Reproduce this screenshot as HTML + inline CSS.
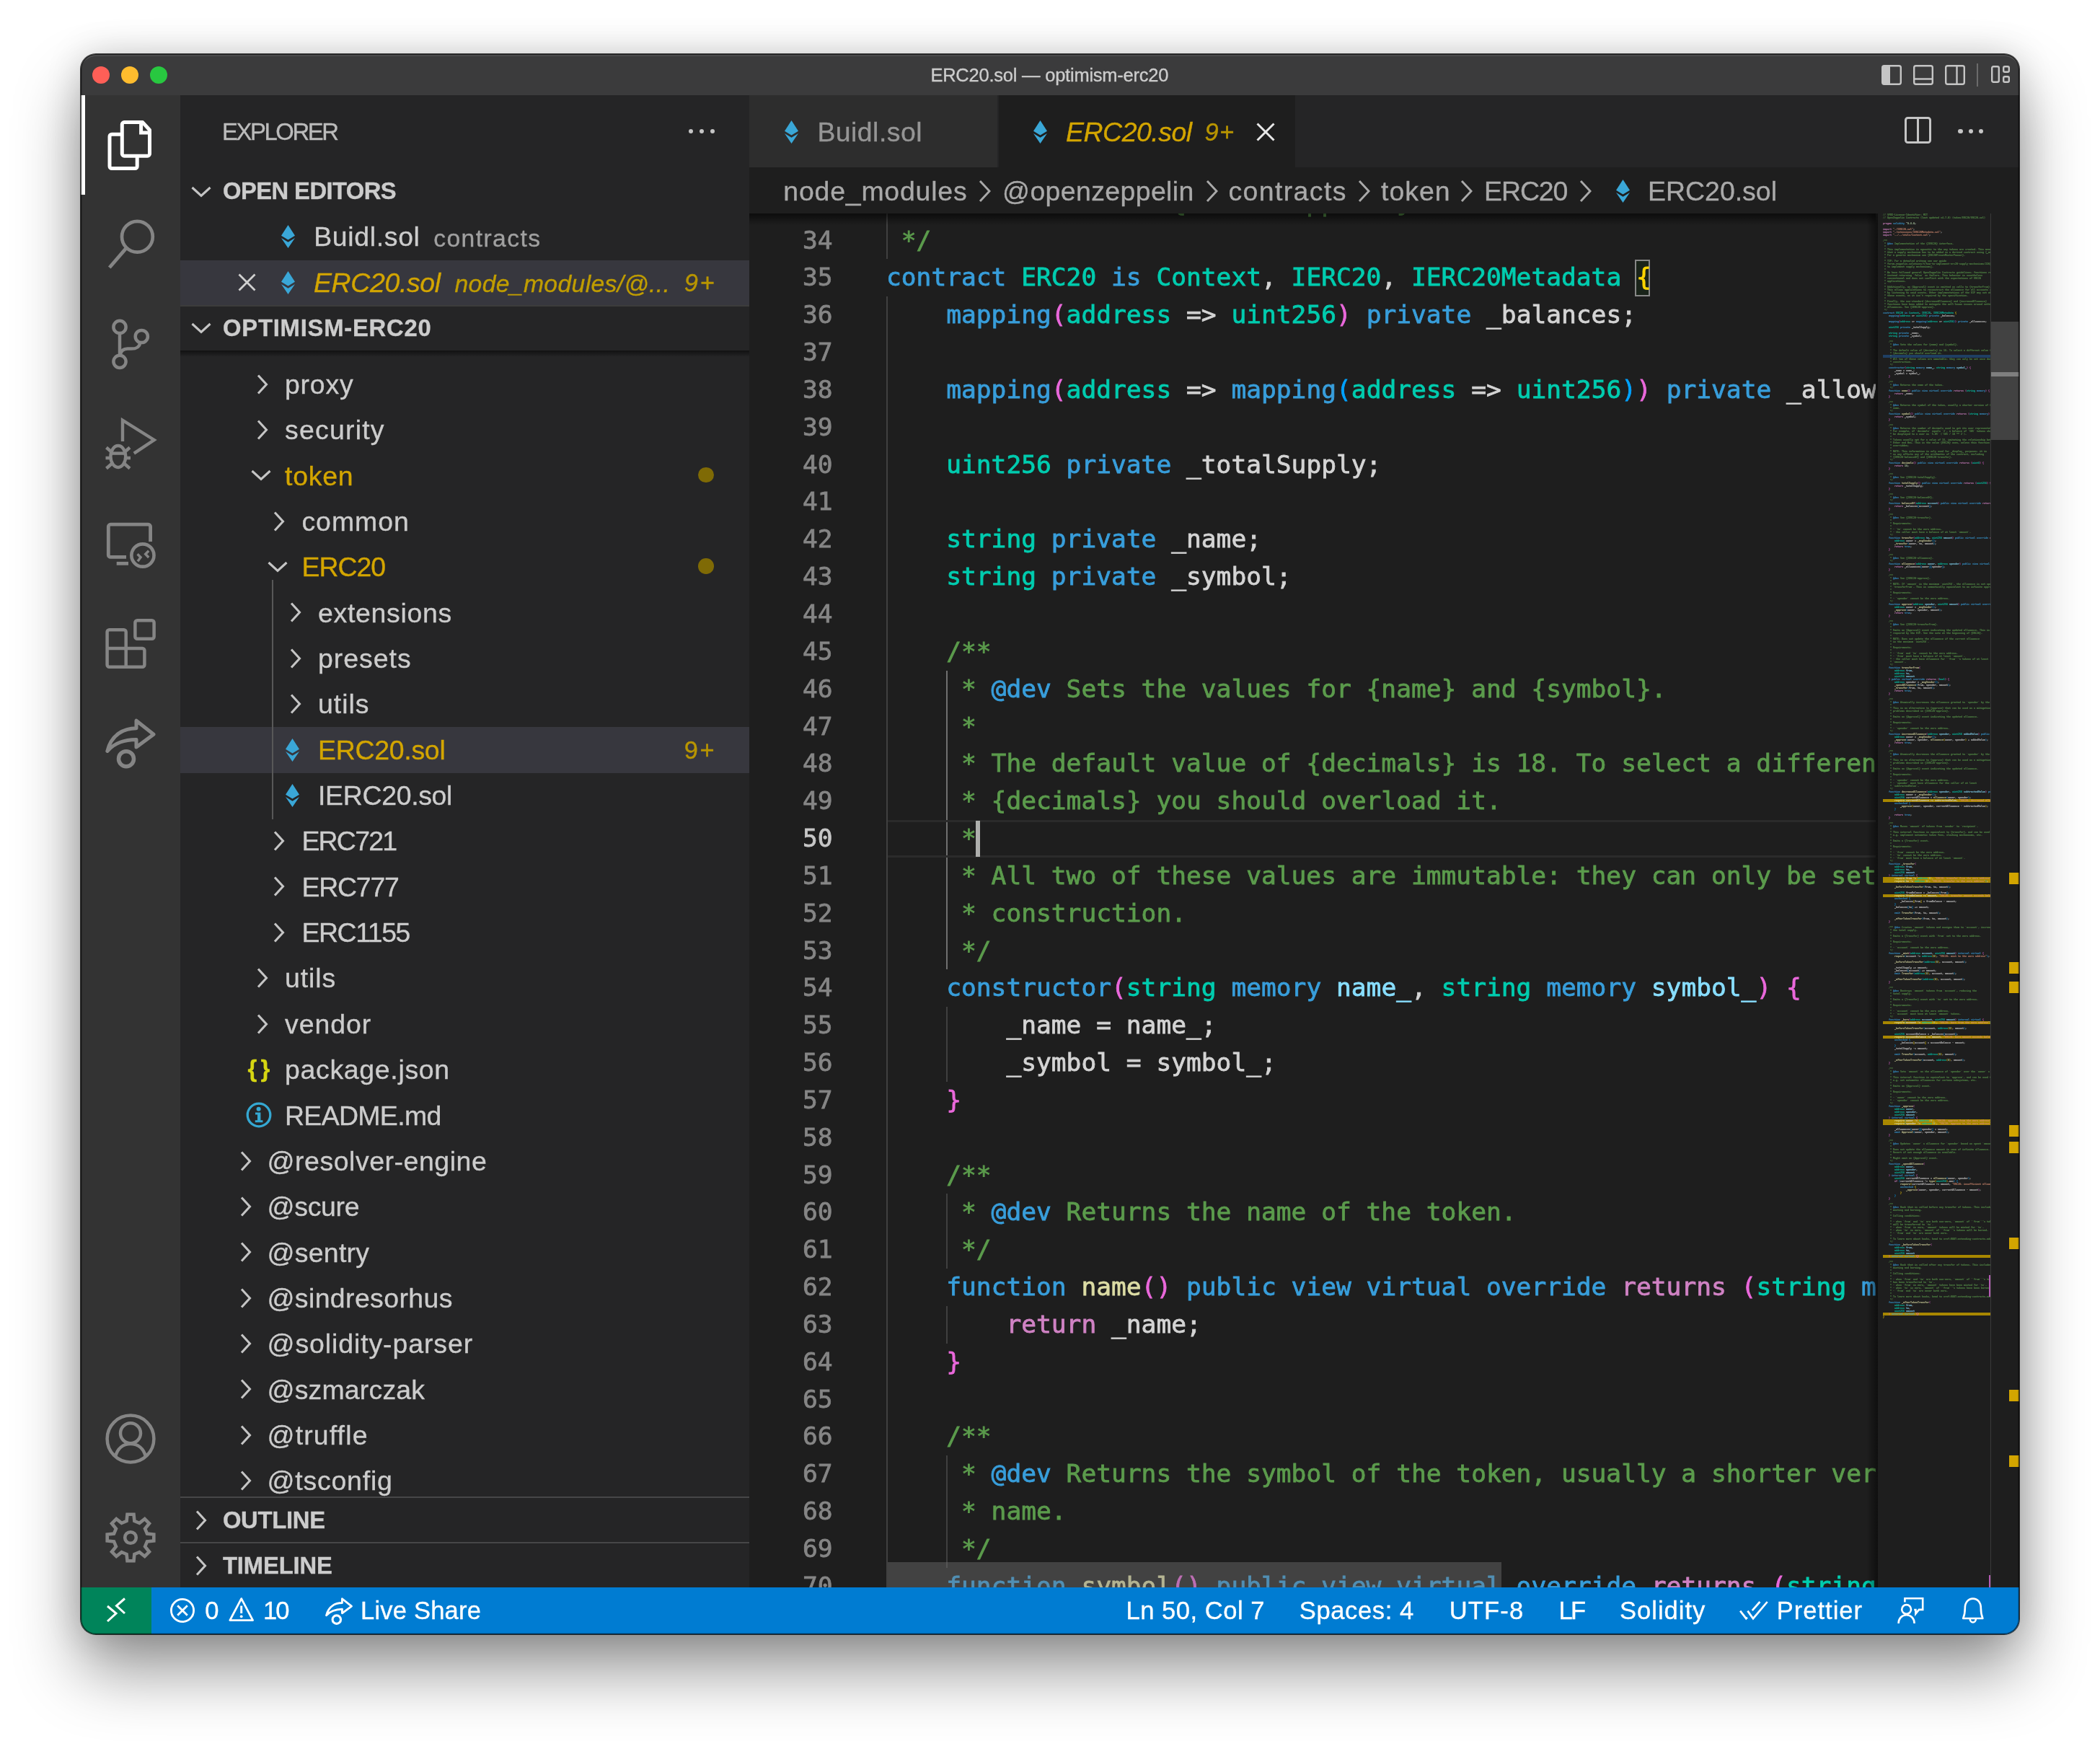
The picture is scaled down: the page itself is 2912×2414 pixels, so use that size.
<!DOCTYPE html>
<html lang="en"><head><meta charset="utf-8"><title>ERC20.sol — optimism-erc20</title>
<style>
html,body{margin:0;padding:0;background:#fff}
body{width:2912px;height:2414px;position:relative;overflow:hidden;font-family:"Liberation Sans","Noto Sans CJK SC",sans-serif}
#sh{position:absolute;left:111.5px;top:75.3px;width:2688.7px;height:2190.6px;border-radius:21px;box-shadow:0 0 0 1px rgba(0,0,0,.75),0 50px 90px 0 rgba(0,0,0,.42),0 0 50px 0 rgba(0,0,0,.16)}
#win{position:absolute;left:111.5px;top:75.3px;width:2688.7px;height:2190.6px;border-radius:21px;overflow:hidden;background:#1e1e1e}
#edge{position:absolute;left:0;top:0;right:0;bottom:0;border-radius:21px;box-shadow:inset 0 0 0 1.3px rgba(0,0,0,.6),inset 0 2.8px 0 0 rgba(255,255,255,.13)}
#in{position:absolute;left:-111.5px;top:-75.3px;width:2912px;height:2414px;will-change:transform}
.t{position:absolute;white-space:pre;-webkit-text-stroke:0.35px}
.code{position:absolute;white-space:pre;-webkit-text-stroke:0.8px;font-family:"DejaVu Sans Mono","Liberation Mono",monospace;color:#d4d4d4}
svg{position:absolute;overflow:visible}
</style></head><body>
<div id="sh"></div>
<div id="win"><div id="in">
<div style="position:absolute;left:111.50px;top:75.30px;width:2688.70px;height:56.70px;background:#3b3b3c;"></div><div style="position:absolute;left:111.50px;top:132.00px;width:138.50px;height:2069.00px;background:#333333;"></div><div style="position:absolute;left:250.00px;top:132.00px;width:789.00px;height:2069.00px;background:#252526;"></div><div style="position:absolute;left:1039.00px;top:132.00px;width:1761.20px;height:100.00px;background:#252526;"></div><div style="position:absolute;left:1039.00px;top:232.00px;width:1761.20px;height:1969.00px;background:#1e1e1e;"></div><div style="position:absolute;left:111.50px;top:2201.00px;width:2688.70px;height:64.90px;background:#007cd2;"></div><div style="position:absolute;left:111.50px;top:2201.00px;width:98.50px;height:64.90px;background:#00845a;"></div><div style="position:absolute;left:127.8px;top:91.8px;width:24.5px;height:24.5px;border-radius:50%;background:#ff5f57"></div><div style="position:absolute;left:167.8px;top:91.8px;width:24.5px;height:24.5px;border-radius:50%;background:#febc2e"></div><div style="position:absolute;left:207.8px;top:91.8px;width:24.5px;height:24.5px;border-radius:50%;background:#28c840"></div><svg style="left:2609.00px;top:90.00px" width="28.00" height="28.00" viewBox="0 0 28.00 28.00" fill="none"><rect x="1.2" y="1.2" width="25.6" height="25.6" rx="2.5" stroke="#c5c5c5" stroke-width="2.4"/><path d="M1.2 3.5a2.3 2.3 0 0 1 2.3-2.3H12V26.8H3.5a2.3 2.3 0 0 1-2.3-2.3z" fill="#c5c5c5"/></svg><svg style="left:2653.00px;top:90.00px" width="28.00" height="28.00" viewBox="0 0 28.00 28.00" fill="none"><rect x="1.2" y="1.2" width="25.6" height="25.6" rx="2.5" stroke="#c5c5c5" stroke-width="2.4"/><path d="M1.2 19.5H26.8" stroke="#c5c5c5" stroke-width="2.4"/></svg><svg style="left:2697.00px;top:90.00px" width="28.00" height="28.00" viewBox="0 0 28.00 28.00" fill="none"><rect x="1.2" y="1.2" width="25.6" height="25.6" rx="2.5" stroke="#c5c5c5" stroke-width="2.4"/><path d="M16.5 1.2V26.8" stroke="#c5c5c5" stroke-width="2.4"/></svg><div style="position:absolute;left:2741.00px;top:88.00px;width:2.00px;height:32.00px;background:#6b6b6b;"></div><svg style="left:2761.00px;top:91.00px" width="26.00" height="26.00" viewBox="0 0 26.00 26.00" fill="none"><rect x="1.2" y="1.2" width="9.6" height="21.6" rx="2" stroke="#c5c5c5" stroke-width="2.4"/><rect x="17.2" y="1.2" width="7.6" height="7.6" rx="1.8" stroke="#c5c5c5" stroke-width="2.4"/><rect x="17.2" y="15.2" width="7.6" height="7.6" rx="1.8" stroke="#c5c5c5" stroke-width="2.4"/></svg><div style="position:absolute;left:954.7px;top:179.0px;width:6px;height:6px;border-radius:50%;background:#c5c5c5"></div><div style="position:absolute;left:970.0px;top:179.0px;width:6px;height:6px;border-radius:50%;background:#c5c5c5"></div><div style="position:absolute;left:984.8px;top:179.0px;width:6px;height:6px;border-radius:50%;background:#c5c5c5"></div><svg style="left:263.00px;top:254.00px" width="32.00" height="24.00" viewBox="0 0 32.00 24.00" fill="none"><path d="M3.5 6L16 17.5L28.5 6" stroke="#c5c5c5" stroke-width="3.1" stroke-linejoin="miter"/></svg><svg style="left:390.20px;top:312.00px" width="19.00" height="32.00" viewBox="0 0 19 32" fill="none"><path d="M9.5 0L19 14.8L9.5 20.5L0 14.8Z" fill="#3aa7d7"/><path d="M0 18.1L9.5 23.8L19 18.1L9.5 32Z" fill="#3aa7d7"/></svg><div style="position:absolute;left:250.00px;top:360.50px;width:789.00px;height:62.50px;background:#37373e;"></div><svg style="left:329.80px;top:378.50px" width="25.00" height="25.00" viewBox="0 0 25.00 25.00" fill="none"><path d="M1.5 1.5L23.5 23.5M23.5 1.5L1.5 23.5" stroke="#d0d0d0" stroke-width="2.8"/></svg><svg style="left:390.20px;top:375.50px" width="19.00" height="32.00" viewBox="0 0 19 32" fill="none"><path d="M9.5 0L19 14.8L9.5 20.5L0 14.8Z" fill="#3aa7d7"/><path d="M0 18.1L9.5 23.8L19 18.1L9.5 32Z" fill="#3aa7d7"/></svg><div style="position:absolute;left:250.00px;top:423.00px;width:789.00px;height:1.50px;background:#3c3c3c;"></div><svg style="left:263.00px;top:443.00px" width="32.00" height="24.00" viewBox="0 0 32.00 24.00" fill="none"><path d="M3.5 6L16 17.5L28.5 6" stroke="#c5c5c5" stroke-width="3.1" stroke-linejoin="miter"/></svg><div style="position:absolute;left:250px;top:486px;width:789px;height:9px;background:linear-gradient(rgba(0,0,0,.55),rgba(0,0,0,0))"></div><div style="position:absolute;left:250.00px;top:1007.70px;width:789.00px;height:64.16px;background:#37373e;"></div><div style="position:absolute;left:377.00px;top:804.00px;width:1.60px;height:332.00px;background:#585858;"></div><svg style="left:352.00px;top:516.50px" width="24.00" height="32.00" viewBox="0 0 24.00 32.00" fill="none"><path d="M6 3.5L17.5 16L6 28.5" stroke="#c5c5c5" stroke-width="3.1" stroke-linejoin="miter"/></svg><svg style="left:352.00px;top:579.86px" width="24.00" height="32.00" viewBox="0 0 24.00 32.00" fill="none"><path d="M6 3.5L17.5 16L6 28.5" stroke="#c5c5c5" stroke-width="3.1" stroke-linejoin="miter"/></svg><svg style="left:346.00px;top:647.22px" width="32.00" height="24.00" viewBox="0 0 32.00 24.00" fill="none"><path d="M3.5 6L16 17.5L28.5 6" stroke="#c5c5c5" stroke-width="3.1" stroke-linejoin="miter"/></svg><svg style="left:375.40px;top:706.58px" width="24.00" height="32.00" viewBox="0 0 24.00 32.00" fill="none"><path d="M6 3.5L17.5 16L6 28.5" stroke="#c5c5c5" stroke-width="3.1" stroke-linejoin="miter"/></svg><svg style="left:369.40px;top:773.94px" width="32.00" height="24.00" viewBox="0 0 32.00 24.00" fill="none"><path d="M3.5 6L16 17.5L28.5 6" stroke="#c5c5c5" stroke-width="3.1" stroke-linejoin="miter"/></svg><svg style="left:398.00px;top:833.30px" width="24.00" height="32.00" viewBox="0 0 24.00 32.00" fill="none"><path d="M6 3.5L17.5 16L6 28.5" stroke="#c5c5c5" stroke-width="3.1" stroke-linejoin="miter"/></svg><svg style="left:398.00px;top:896.66px" width="24.00" height="32.00" viewBox="0 0 24.00 32.00" fill="none"><path d="M6 3.5L17.5 16L6 28.5" stroke="#c5c5c5" stroke-width="3.1" stroke-linejoin="miter"/></svg><svg style="left:398.00px;top:960.02px" width="24.00" height="32.00" viewBox="0 0 24.00 32.00" fill="none"><path d="M6 3.5L17.5 16L6 28.5" stroke="#c5c5c5" stroke-width="3.1" stroke-linejoin="miter"/></svg><svg style="left:395.70px;top:1023.78px" width="19.00" height="32.00" viewBox="0 0 19 32" fill="none"><path d="M9.5 0L19 14.8L9.5 20.5L0 14.8Z" fill="#3aa7d7"/><path d="M0 18.1L9.5 23.8L19 18.1L9.5 32Z" fill="#3aa7d7"/></svg><svg style="left:395.70px;top:1087.14px" width="19.00" height="32.00" viewBox="0 0 19 32" fill="none"><path d="M9.5 0L19 14.8L9.5 20.5L0 14.8Z" fill="#3aa7d7"/><path d="M0 18.1L9.5 23.8L19 18.1L9.5 32Z" fill="#3aa7d7"/></svg><svg style="left:375.40px;top:1150.10px" width="24.00" height="32.00" viewBox="0 0 24.00 32.00" fill="none"><path d="M6 3.5L17.5 16L6 28.5" stroke="#c5c5c5" stroke-width="3.1" stroke-linejoin="miter"/></svg><svg style="left:375.40px;top:1213.46px" width="24.00" height="32.00" viewBox="0 0 24.00 32.00" fill="none"><path d="M6 3.5L17.5 16L6 28.5" stroke="#c5c5c5" stroke-width="3.1" stroke-linejoin="miter"/></svg><svg style="left:375.40px;top:1276.82px" width="24.00" height="32.00" viewBox="0 0 24.00 32.00" fill="none"><path d="M6 3.5L17.5 16L6 28.5" stroke="#c5c5c5" stroke-width="3.1" stroke-linejoin="miter"/></svg><svg style="left:352.00px;top:1340.18px" width="24.00" height="32.00" viewBox="0 0 24.00 32.00" fill="none"><path d="M6 3.5L17.5 16L6 28.5" stroke="#c5c5c5" stroke-width="3.1" stroke-linejoin="miter"/></svg><svg style="left:352.00px;top:1403.54px" width="24.00" height="32.00" viewBox="0 0 24.00 32.00" fill="none"><path d="M6 3.5L17.5 16L6 28.5" stroke="#c5c5c5" stroke-width="3.1" stroke-linejoin="miter"/></svg><svg style="left:341.00px;top:1528.26px" width="36.00" height="36.00" viewBox="0 0 36.00 36.00" fill="none"><circle cx="18" cy="18" r="15.8" stroke="#35a8d2" stroke-width="3.3"/><circle cx="17.6" cy="9.8" r="3" fill="#35a8d2"/><path d="M13 14.6h7.4v10.6h3v3h-10.6v-3h3.2v-7.6H13z" fill="#35a8d2"/></svg><svg style="left:329.00px;top:1593.62px" width="24.00" height="32.00" viewBox="0 0 24.00 32.00" fill="none"><path d="M6 3.5L17.5 16L6 28.5" stroke="#c5c5c5" stroke-width="3.1" stroke-linejoin="miter"/></svg><svg style="left:329.00px;top:1656.98px" width="24.00" height="32.00" viewBox="0 0 24.00 32.00" fill="none"><path d="M6 3.5L17.5 16L6 28.5" stroke="#c5c5c5" stroke-width="3.1" stroke-linejoin="miter"/></svg><svg style="left:329.00px;top:1720.34px" width="24.00" height="32.00" viewBox="0 0 24.00 32.00" fill="none"><path d="M6 3.5L17.5 16L6 28.5" stroke="#c5c5c5" stroke-width="3.1" stroke-linejoin="miter"/></svg><svg style="left:329.00px;top:1783.70px" width="24.00" height="32.00" viewBox="0 0 24.00 32.00" fill="none"><path d="M6 3.5L17.5 16L6 28.5" stroke="#c5c5c5" stroke-width="3.1" stroke-linejoin="miter"/></svg><svg style="left:329.00px;top:1847.06px" width="24.00" height="32.00" viewBox="0 0 24.00 32.00" fill="none"><path d="M6 3.5L17.5 16L6 28.5" stroke="#c5c5c5" stroke-width="3.1" stroke-linejoin="miter"/></svg><svg style="left:329.00px;top:1910.42px" width="24.00" height="32.00" viewBox="0 0 24.00 32.00" fill="none"><path d="M6 3.5L17.5 16L6 28.5" stroke="#c5c5c5" stroke-width="3.1" stroke-linejoin="miter"/></svg><svg style="left:329.00px;top:1973.78px" width="24.00" height="32.00" viewBox="0 0 24.00 32.00" fill="none"><path d="M6 3.5L17.5 16L6 28.5" stroke="#c5c5c5" stroke-width="3.1" stroke-linejoin="miter"/></svg><svg style="left:329.00px;top:2037.14px" width="24.00" height="32.00" viewBox="0 0 24.00 32.00" fill="none"><path d="M6 3.5L17.5 16L6 28.5" stroke="#c5c5c5" stroke-width="3.1" stroke-linejoin="miter"/></svg><div style="position:absolute;left:968.0px;top:647.6px;width:21.5px;height:21.5px;border-radius:50%;background:#7f6a05"></div><div style="position:absolute;left:968.0px;top:774.3px;width:21.5px;height:21.5px;border-radius:50%;background:#7f6a05"></div><div style="position:absolute;left:250.00px;top:2076.00px;width:789.00px;height:125.00px;background:#252526;"></div><div style="position:absolute;left:250.00px;top:2075.00px;width:789.00px;height:2.40px;background:#474748;"></div><div style="position:absolute;left:250.00px;top:2138.00px;width:789.00px;height:2.40px;background:#474748;"></div><svg style="left:267.00px;top:2092.00px" width="24.00" height="32.00" viewBox="0 0 24.00 32.00" fill="none"><path d="M6 3.5L17.5 16L6 28.5" stroke="#c5c5c5" stroke-width="3.1" stroke-linejoin="miter"/></svg><svg style="left:267.00px;top:2155.00px" width="24.00" height="32.00" viewBox="0 0 24.00 32.00" fill="none"><path d="M6 3.5L17.5 16L6 28.5" stroke="#c5c5c5" stroke-width="3.1" stroke-linejoin="miter"/></svg><div style="position:absolute;left:1039.00px;top:132.00px;width:345.00px;height:100.00px;background:#2d2d2d;"></div><div style="position:absolute;left:1384.00px;top:132.00px;width:411.50px;height:100.00px;background:#1e1e1e;"></div><div style="position:absolute;left:1383.00px;top:132.00px;width:1.50px;height:100.00px;background:#252526;"></div><svg style="left:1087.50px;top:166.50px" width="19.00" height="32.00" viewBox="0 0 19 32" fill="none"><path d="M9.5 0L19 14.8L9.5 20.5L0 14.8Z" fill="#3aa7d7"/><path d="M0 18.1L9.5 23.8L19 18.1L9.5 32Z" fill="#3aa7d7"/></svg><svg style="left:1432.50px;top:166.50px" width="19.00" height="32.00" viewBox="0 0 19 32" fill="none"><path d="M9.5 0L19 14.8L9.5 20.5L0 14.8Z" fill="#3aa7d7"/><path d="M0 18.1L9.5 23.8L19 18.1L9.5 32Z" fill="#3aa7d7"/></svg><svg style="left:1742.40px;top:169.50px" width="26.00" height="26.00" viewBox="0 0 26.00 26.00" fill="none"><path d="M1.5 1.5L24.5 24.5M24.5 1.5L1.5 24.5" stroke="#e8e8e8" stroke-width="3"/></svg><svg style="left:2641.00px;top:162.00px" width="37.00" height="37.00" viewBox="0 0 37.00 37.00" fill="none"><rect x="1.5" y="1.5" width="34" height="34" rx="3" stroke="#c5c5c5" stroke-width="3"/><path d="M18.5 1.5V35.5" stroke="#c5c5c5" stroke-width="3"/></svg><div style="position:absolute;left:2715.2px;top:178.8px;width:6.4px;height:6.4px;border-radius:50%;background:#c5c5c5"></div><div style="position:absolute;left:2729.6px;top:178.8px;width:6.4px;height:6.4px;border-radius:50%;background:#c5c5c5"></div><div style="position:absolute;left:2743.8px;top:178.8px;width:6.4px;height:6.4px;border-radius:50%;background:#c5c5c5"></div><svg style="left:1353.60px;top:248.60px" width="24.00" height="32.00" viewBox="0 0 24.00 32.00" fill="none"><path d="M5 2L18 16L5 30" stroke="#a9a9a9" stroke-width="2.9"/></svg><svg style="left:1669.00px;top:248.60px" width="24.00" height="32.00" viewBox="0 0 24.00 32.00" fill="none"><path d="M5 2L18 16L5 30" stroke="#a9a9a9" stroke-width="2.9"/></svg><svg style="left:1880.00px;top:248.60px" width="24.00" height="32.00" viewBox="0 0 24.00 32.00" fill="none"><path d="M5 2L18 16L5 30" stroke="#a9a9a9" stroke-width="2.9"/></svg><svg style="left:2022.00px;top:248.60px" width="24.00" height="32.00" viewBox="0 0 24.00 32.00" fill="none"><path d="M5 2L18 16L5 30" stroke="#a9a9a9" stroke-width="2.9"/></svg><svg style="left:2187.00px;top:248.60px" width="24.00" height="32.00" viewBox="0 0 24.00 32.00" fill="none"><path d="M5 2L18 16L5 30" stroke="#a9a9a9" stroke-width="2.9"/></svg><svg style="left:2240.50px;top:249.00px" width="19.00" height="32.00" viewBox="0 0 19 32" fill="none"><path d="M9.5 0L19 14.8L9.5 20.5L0 14.8Z" fill="#3aa7d7"/><path d="M0 18.1L9.5 23.8L19 18.1L9.5 32Z" fill="#3aa7d7"/></svg><div style="position:absolute;left:1039px;top:296px;width:1562px;height:1905px;overflow:hidden"><div style="position:absolute;left:189.50px;top:-40.24px;width:2.6px;height:103.68px;background:#404040"></div><div style="position:absolute;left:189.50px;top:115.28px;width:2.6px;height:1866.24px;background:#404040"></div><div style="position:absolute;left:272.72px;top:633.68px;width:2.6px;height:414.72px;background:#707070"></div><div style="position:absolute;left:272.72px;top:1100.24px;width:2.6px;height:103.68px;background:#404040"></div><div style="position:absolute;left:272.72px;top:1359.44px;width:2.6px;height:103.68px;background:#404040"></div><div style="position:absolute;left:272.72px;top:1514.96px;width:2.6px;height:51.84px;background:#404040"></div><div style="position:absolute;left:272.72px;top:1722.32px;width:2.6px;height:155.52px;background:#404040"></div><div style="position:absolute;left:192.0px;top:841.0px;width:1372.5px;height:51.8px;box-sizing:border-box;border-top:3px solid #2b2b2b;border-bottom:3px solid #2b2b2b"></div><div style="position:absolute;left:1228.2px;top:64.4px;width:20.8px;height:50.8px;box-sizing:border-box;border:2px solid #888;background:rgba(0,100,0,.1)"></div><div class="code" style="left:0.0px;top:-40.24px;width:115.5px;text-align:right;color:#858585;font-size:34.56px;line-height:51.84px;height:51.84px">33</div><div class="code" style="left:190.00px;top:-40.24px;font-size:34.56px;line-height:51.84px;height:51.84px"><span style="color:#5b9b4c"> * allowances. See {IERC20-approve}.</span></div><div class="code" style="left:0.0px;top:11.60px;width:115.5px;text-align:right;color:#858585;font-size:34.56px;line-height:51.84px;height:51.84px">34</div><div class="code" style="left:190.00px;top:11.60px;font-size:34.56px;line-height:51.84px;height:51.84px"><span style="color:#5b9b4c"> */</span></div><div class="code" style="left:0.0px;top:63.44px;width:115.5px;text-align:right;color:#858585;font-size:34.56px;line-height:51.84px;height:51.84px">35</div><div class="code" style="left:190.00px;top:63.44px;font-size:34.56px;line-height:51.84px;height:51.84px"><span style="color:#389edb">contract </span><span style="color:#00ccaf">ERC20 </span><span style="color:#389edb">is </span><span style="color:#00ccaf">Context</span>, <span style="color:#00ccaf">IERC20</span>, <span style="color:#00ccaf">IERC20Metadata </span><span style="color:#ffd500">{</span></div><div class="code" style="left:0.0px;top:115.28px;width:115.5px;text-align:right;color:#858585;font-size:34.56px;line-height:51.84px;height:51.84px">36</div><div class="code" style="left:190.00px;top:115.28px;font-size:34.56px;line-height:51.84px;height:51.84px">    <span style="color:#389edb">mapping</span><span style="color:#ea68db">(</span><span style="color:#00ccaf">address </span>=&gt; <span style="color:#00ccaf">uint256</span><span style="color:#ea68db">) </span><span style="color:#389edb">private </span>_balances;</div><div class="code" style="left:0.0px;top:167.12px;width:115.5px;text-align:right;color:#858585;font-size:34.56px;line-height:51.84px;height:51.84px">37</div><div class="code" style="left:190.00px;top:167.12px;font-size:34.56px;line-height:51.84px;height:51.84px"></div><div class="code" style="left:0.0px;top:218.96px;width:115.5px;text-align:right;color:#858585;font-size:34.56px;line-height:51.84px;height:51.84px">38</div><div class="code" style="left:190.00px;top:218.96px;font-size:34.56px;line-height:51.84px;height:51.84px">    <span style="color:#389edb">mapping</span><span style="color:#ea68db">(</span><span style="color:#00ccaf">address </span>=&gt; <span style="color:#389edb">mapping</span><span style="color:#00a2ff">(</span><span style="color:#00ccaf">address </span>=&gt; <span style="color:#00ccaf">uint256</span><span style="color:#00a2ff">)</span><span style="color:#ea68db">) </span><span style="color:#389edb">private </span>_allowances;</div><div class="code" style="left:0.0px;top:270.80px;width:115.5px;text-align:right;color:#858585;font-size:34.56px;line-height:51.84px;height:51.84px">39</div><div class="code" style="left:190.00px;top:270.80px;font-size:34.56px;line-height:51.84px;height:51.84px"></div><div class="code" style="left:0.0px;top:322.64px;width:115.5px;text-align:right;color:#858585;font-size:34.56px;line-height:51.84px;height:51.84px">40</div><div class="code" style="left:190.00px;top:322.64px;font-size:34.56px;line-height:51.84px;height:51.84px">    <span style="color:#00ccaf">uint256 </span><span style="color:#389edb">private </span>_totalSupply;</div><div class="code" style="left:0.0px;top:374.48px;width:115.5px;text-align:right;color:#858585;font-size:34.56px;line-height:51.84px;height:51.84px">41</div><div class="code" style="left:190.00px;top:374.48px;font-size:34.56px;line-height:51.84px;height:51.84px"></div><div class="code" style="left:0.0px;top:426.32px;width:115.5px;text-align:right;color:#858585;font-size:34.56px;line-height:51.84px;height:51.84px">42</div><div class="code" style="left:190.00px;top:426.32px;font-size:34.56px;line-height:51.84px;height:51.84px">    <span style="color:#00ccaf">string </span><span style="color:#389edb">private </span>_name;</div><div class="code" style="left:0.0px;top:478.16px;width:115.5px;text-align:right;color:#858585;font-size:34.56px;line-height:51.84px;height:51.84px">43</div><div class="code" style="left:190.00px;top:478.16px;font-size:34.56px;line-height:51.84px;height:51.84px">    <span style="color:#00ccaf">string </span><span style="color:#389edb">private </span>_symbol;</div><div class="code" style="left:0.0px;top:530.00px;width:115.5px;text-align:right;color:#858585;font-size:34.56px;line-height:51.84px;height:51.84px">44</div><div class="code" style="left:190.00px;top:530.00px;font-size:34.56px;line-height:51.84px;height:51.84px"></div><div class="code" style="left:0.0px;top:581.84px;width:115.5px;text-align:right;color:#858585;font-size:34.56px;line-height:51.84px;height:51.84px">45</div><div class="code" style="left:190.00px;top:581.84px;font-size:34.56px;line-height:51.84px;height:51.84px">    <span style="color:#5b9b4c">/**</span></div><div class="code" style="left:0.0px;top:633.68px;width:115.5px;text-align:right;color:#858585;font-size:34.56px;line-height:51.84px;height:51.84px">46</div><div class="code" style="left:190.00px;top:633.68px;font-size:34.56px;line-height:51.84px;height:51.84px"><span style="color:#5b9b4c">     * </span><span style="color:#389edb">@dev</span><span style="color:#5b9b4c"> Sets the values for {name} and {symbol}.</span></div><div class="code" style="left:0.0px;top:685.52px;width:115.5px;text-align:right;color:#858585;font-size:34.56px;line-height:51.84px;height:51.84px">47</div><div class="code" style="left:190.00px;top:685.52px;font-size:34.56px;line-height:51.84px;height:51.84px"><span style="color:#5b9b4c">     *</span></div><div class="code" style="left:0.0px;top:737.36px;width:115.5px;text-align:right;color:#858585;font-size:34.56px;line-height:51.84px;height:51.84px">48</div><div class="code" style="left:190.00px;top:737.36px;font-size:34.56px;line-height:51.84px;height:51.84px"><span style="color:#5b9b4c">     * The default value of {decimals} is 18. To select a different value for</span></div><div class="code" style="left:0.0px;top:789.20px;width:115.5px;text-align:right;color:#858585;font-size:34.56px;line-height:51.84px;height:51.84px">49</div><div class="code" style="left:190.00px;top:789.20px;font-size:34.56px;line-height:51.84px;height:51.84px"><span style="color:#5b9b4c">     * {decimals} you should overload it.</span></div><div class="code" style="left:0.0px;top:841.04px;width:115.5px;text-align:right;color:#c6c6c6;font-size:34.56px;line-height:51.84px;height:51.84px">50</div><div class="code" style="left:190.00px;top:841.04px;font-size:34.56px;line-height:51.84px;height:51.84px"><span style="color:#5b9b4c">     *</span></div><div class="code" style="left:0.0px;top:892.88px;width:115.5px;text-align:right;color:#858585;font-size:34.56px;line-height:51.84px;height:51.84px">51</div><div class="code" style="left:190.00px;top:892.88px;font-size:34.56px;line-height:51.84px;height:51.84px"><span style="color:#5b9b4c">     * All two of these values are immutable: they can only be set once during</span></div><div class="code" style="left:0.0px;top:944.72px;width:115.5px;text-align:right;color:#858585;font-size:34.56px;line-height:51.84px;height:51.84px">52</div><div class="code" style="left:190.00px;top:944.72px;font-size:34.56px;line-height:51.84px;height:51.84px"><span style="color:#5b9b4c">     * construction.</span></div><div class="code" style="left:0.0px;top:996.56px;width:115.5px;text-align:right;color:#858585;font-size:34.56px;line-height:51.84px;height:51.84px">53</div><div class="code" style="left:190.00px;top:996.56px;font-size:34.56px;line-height:51.84px;height:51.84px"><span style="color:#5b9b4c">     */</span></div><div class="code" style="left:0.0px;top:1048.40px;width:115.5px;text-align:right;color:#858585;font-size:34.56px;line-height:51.84px;height:51.84px">54</div><div class="code" style="left:190.00px;top:1048.40px;font-size:34.56px;line-height:51.84px;height:51.84px">    <span style="color:#389edb">constructor</span><span style="color:#ea68db">(</span><span style="color:#00ccaf">string </span><span style="color:#389edb">memory </span><span style="color:#88deff">name_</span>, <span style="color:#00ccaf">string </span><span style="color:#389edb">memory </span><span style="color:#88deff">symbol_</span><span style="color:#ea68db">) {</span></div><div class="code" style="left:0.0px;top:1100.24px;width:115.5px;text-align:right;color:#858585;font-size:34.56px;line-height:51.84px;height:51.84px">55</div><div class="code" style="left:190.00px;top:1100.24px;font-size:34.56px;line-height:51.84px;height:51.84px">        _name = name_;</div><div class="code" style="left:0.0px;top:1152.08px;width:115.5px;text-align:right;color:#858585;font-size:34.56px;line-height:51.84px;height:51.84px">56</div><div class="code" style="left:190.00px;top:1152.08px;font-size:34.56px;line-height:51.84px;height:51.84px">        _symbol = symbol_;</div><div class="code" style="left:0.0px;top:1203.92px;width:115.5px;text-align:right;color:#858585;font-size:34.56px;line-height:51.84px;height:51.84px">57</div><div class="code" style="left:190.00px;top:1203.92px;font-size:34.56px;line-height:51.84px;height:51.84px">    <span style="color:#ea68db">}</span></div><div class="code" style="left:0.0px;top:1255.76px;width:115.5px;text-align:right;color:#858585;font-size:34.56px;line-height:51.84px;height:51.84px">58</div><div class="code" style="left:190.00px;top:1255.76px;font-size:34.56px;line-height:51.84px;height:51.84px"></div><div class="code" style="left:0.0px;top:1307.60px;width:115.5px;text-align:right;color:#858585;font-size:34.56px;line-height:51.84px;height:51.84px">59</div><div class="code" style="left:190.00px;top:1307.60px;font-size:34.56px;line-height:51.84px;height:51.84px">    <span style="color:#5b9b4c">/**</span></div><div class="code" style="left:0.0px;top:1359.44px;width:115.5px;text-align:right;color:#858585;font-size:34.56px;line-height:51.84px;height:51.84px">60</div><div class="code" style="left:190.00px;top:1359.44px;font-size:34.56px;line-height:51.84px;height:51.84px"><span style="color:#5b9b4c">     * </span><span style="color:#389edb">@dev</span><span style="color:#5b9b4c"> Returns the name of the token.</span></div><div class="code" style="left:0.0px;top:1411.28px;width:115.5px;text-align:right;color:#858585;font-size:34.56px;line-height:51.84px;height:51.84px">61</div><div class="code" style="left:190.00px;top:1411.28px;font-size:34.56px;line-height:51.84px;height:51.84px"><span style="color:#5b9b4c">     */</span></div><div class="code" style="left:0.0px;top:1463.12px;width:115.5px;text-align:right;color:#858585;font-size:34.56px;line-height:51.84px;height:51.84px">62</div><div class="code" style="left:190.00px;top:1463.12px;font-size:34.56px;line-height:51.84px;height:51.84px">    <span style="color:#389edb">function </span><span style="color:#dcdca4">name</span><span style="color:#ea68db">() </span><span style="color:#389edb">public view virtual override </span><span style="color:#d082c4">returns </span><span style="color:#ea68db">(</span><span style="color:#00ccaf">string </span><span style="color:#389edb">memory</span><span style="color:#ea68db">) {</span></div><div class="code" style="left:0.0px;top:1514.96px;width:115.5px;text-align:right;color:#858585;font-size:34.56px;line-height:51.84px;height:51.84px">63</div><div class="code" style="left:190.00px;top:1514.96px;font-size:34.56px;line-height:51.84px;height:51.84px">        <span style="color:#d082c4">return </span>_name;</div><div class="code" style="left:0.0px;top:1566.80px;width:115.5px;text-align:right;color:#858585;font-size:34.56px;line-height:51.84px;height:51.84px">64</div><div class="code" style="left:190.00px;top:1566.80px;font-size:34.56px;line-height:51.84px;height:51.84px">    <span style="color:#ea68db">}</span></div><div class="code" style="left:0.0px;top:1618.64px;width:115.5px;text-align:right;color:#858585;font-size:34.56px;line-height:51.84px;height:51.84px">65</div><div class="code" style="left:190.00px;top:1618.64px;font-size:34.56px;line-height:51.84px;height:51.84px"></div><div class="code" style="left:0.0px;top:1670.48px;width:115.5px;text-align:right;color:#858585;font-size:34.56px;line-height:51.84px;height:51.84px">66</div><div class="code" style="left:190.00px;top:1670.48px;font-size:34.56px;line-height:51.84px;height:51.84px">    <span style="color:#5b9b4c">/**</span></div><div class="code" style="left:0.0px;top:1722.32px;width:115.5px;text-align:right;color:#858585;font-size:34.56px;line-height:51.84px;height:51.84px">67</div><div class="code" style="left:190.00px;top:1722.32px;font-size:34.56px;line-height:51.84px;height:51.84px"><span style="color:#5b9b4c">     * </span><span style="color:#389edb">@dev</span><span style="color:#5b9b4c"> Returns the symbol of the token, usually a shorter version of the</span></div><div class="code" style="left:0.0px;top:1774.16px;width:115.5px;text-align:right;color:#858585;font-size:34.56px;line-height:51.84px;height:51.84px">68</div><div class="code" style="left:190.00px;top:1774.16px;font-size:34.56px;line-height:51.84px;height:51.84px"><span style="color:#5b9b4c">     * name.</span></div><div class="code" style="left:0.0px;top:1826.00px;width:115.5px;text-align:right;color:#858585;font-size:34.56px;line-height:51.84px;height:51.84px">69</div><div class="code" style="left:190.00px;top:1826.00px;font-size:34.56px;line-height:51.84px;height:51.84px"><span style="color:#5b9b4c">     */</span></div><div class="code" style="left:0.0px;top:1877.84px;width:115.5px;text-align:right;color:#858585;font-size:34.56px;line-height:51.84px;height:51.84px">70</div><div class="code" style="left:190.00px;top:1877.84px;font-size:34.56px;line-height:51.84px;height:51.84px">    <span style="color:#389edb">function </span><span style="color:#dcdca4">symbol</span><span style="color:#ea68db">() </span><span style="color:#389edb">public view virtual override </span><span style="color:#d082c4">returns </span><span style="color:#ea68db">(</span><span style="color:#00ccaf">string </span><span style="color:#389edb">memory</span><span style="color:#ea68db">) {</span></div><div class="code" style="left:0.0px;top:1929.68px;width:115.5px;text-align:right;color:#858585;font-size:34.56px;line-height:51.84px;height:51.84px">71</div><div class="code" style="left:190.00px;top:1929.68px;font-size:34.56px;line-height:51.84px;height:51.84px">        <span style="color:#d082c4">return </span>_symbol;</div><div style="position:absolute;left:313.8px;top:841.5px;width:5.8px;height:50.8px;background:#aeafad"></div><div style="position:absolute;left:0;top:0;width:100%;height:16px;background:linear-gradient(rgba(0,0,0,.6),rgba(0,0,0,0))"></div><div style="position:absolute;left:192.0px;top:1870.0px;width:851.0px;height:35.0px;background:rgba(121,121,121,.4)"></div></div><div style="position:absolute;left:2604.0px;top:296px;width:155.5px;height:1905px;overflow:hidden;background:#1e1e1e"><div style="position:absolute;left:7px;top:812px;width:148.5px;height:4px;background:#a88700"></div><div style="position:absolute;left:7px;top:920px;width:148.5px;height:4px;background:#a88700"></div><div style="position:absolute;left:7px;top:924px;width:148.5px;height:4px;background:#a88700"></div><div style="position:absolute;left:7px;top:944px;width:148.5px;height:4px;background:#a88700"></div><div style="position:absolute;left:7px;top:1120px;width:148.5px;height:4px;background:#a88700"></div><div style="position:absolute;left:7px;top:1140px;width:148.5px;height:4px;background:#a88700"></div><div style="position:absolute;left:7px;top:1256px;width:148.5px;height:4px;background:#a88700"></div><div style="position:absolute;left:7px;top:1260px;width:148.5px;height:4px;background:#a88700"></div><div style="position:absolute;left:7px;top:1444px;width:148.5px;height:4px;background:#a88700"></div><div style="position:absolute;left:7px;top:1524px;width:148.5px;height:4px;background:#a88700"></div><div style="position:absolute;left:7px;top:196px;width:148.5px;height:4px;background:#1f3f63"></div><div class="code" style="left:7px;top:0;font-size:33.220px;line-height:40.00px;transform-origin:0 0;transform:scale(0.1000);font-weight:bold;opacity:.78"><span style="color:#5b9b4c">// SPDX-License-Identifier: MIT</span>
<span style="color:#5b9b4c">// OpenZeppelin Contracts (last updated v4.7.0) (token/ERC20/ERC20.sol)</span>

<span style="color:#d082c4">pragma </span><span style="color:#389edb">solidity </span>^<span style="color:#afcfa4">0.8.0</span>;

<span style="color:#d082c4">import </span><span style="color:#d98e73">"./IERC20.sol"</span>;
<span style="color:#d082c4">import </span><span style="color:#d98e73">"./extensions/IERC20Metadata.sol"</span>;
<span style="color:#d082c4">import </span><span style="color:#d98e73">"../../utils/Context.sol"</span>;

<span style="color:#5b9b4c">/**</span>
<span style="color:#5b9b4c"> * </span><span style="color:#389edb">@dev</span><span style="color:#5b9b4c"> Implementation of the {IERC20} interface.</span>
<span style="color:#5b9b4c"> *</span>
<span style="color:#5b9b4c"> * This implementation is agnostic to the way tokens are created. This means</span>
<span style="color:#5b9b4c"> * that a supply mechanism has to be added in a derived contract using {_mint}.</span>
<span style="color:#5b9b4c"> * For a generic mechanism see {ERC20PresetMinterPauser}.</span>
<span style="color:#5b9b4c"> *</span>
<span style="color:#5b9b4c"> * TIP: For a detailed writeup see our guide</span>
<span style="color:#5b9b4c"> * forum.zeppelin.solutions/t/how-to-implement-erc20-supply-mechanisms/226[How we did it</span>
<span style="color:#5b9b4c"> * to implement supply mechanisms].</span>
<span style="color:#5b9b4c"> *</span>
<span style="color:#5b9b4c"> * We have followed general OpenZeppelin Contracts guidelines: functions revert</span>
<span style="color:#5b9b4c"> * instead returning `false` on failure. This behavior is nonetheless</span>
<span style="color:#5b9b4c"> * conventional and does not conflict with the expectations of ERC20</span>
<span style="color:#5b9b4c"> * applications.</span>
<span style="color:#5b9b4c"> *</span>
<span style="color:#5b9b4c"> * Additionally, an {Approval} event is emitted on calls to {transferFrom}.</span>
<span style="color:#5b9b4c"> * This allows applications to reconstruct the allowance for all accounts just</span>
<span style="color:#5b9b4c"> * by listening to said events. Other implementations of the EIP may not emit</span>
<span style="color:#5b9b4c"> * these events, as it isn't required by the specification.</span>
<span style="color:#5b9b4c"> *</span>
<span style="color:#5b9b4c"> * Finally, the non-standard {decreaseAllowance} and {increaseAllowance}</span>
<span style="color:#5b9b4c"> * functions have been added to mitigate the well-known issues around setting</span>
<span style="color:#5b9b4c"> * allowances. See {IERC20-approve}.</span>
<span style="color:#5b9b4c"> */</span>
<span style="color:#389edb">contract </span><span style="color:#00ccaf">ERC20 </span><span style="color:#389edb">is </span><span style="color:#00ccaf">Context</span>, <span style="color:#00ccaf">IERC20</span>, <span style="color:#00ccaf">IERC20Metadata </span><span style="color:#ffd500">{</span>
    <span style="color:#389edb">mapping</span><span style="color:#ea68db">(</span><span style="color:#00ccaf">address </span>=&gt; <span style="color:#00ccaf">uint256</span><span style="color:#ea68db">) </span><span style="color:#389edb">private </span>_balances;

    <span style="color:#389edb">mapping</span><span style="color:#ea68db">(</span><span style="color:#00ccaf">address </span>=&gt; <span style="color:#389edb">mapping</span><span style="color:#00a2ff">(</span><span style="color:#00ccaf">address </span>=&gt; <span style="color:#00ccaf">uint256</span><span style="color:#00a2ff">)</span><span style="color:#ea68db">) </span><span style="color:#389edb">private </span>_allowances;

    <span style="color:#00ccaf">uint256 </span><span style="color:#389edb">private </span>_totalSupply;

    <span style="color:#00ccaf">string </span><span style="color:#389edb">private </span>_name;
    <span style="color:#00ccaf">string </span><span style="color:#389edb">private </span>_symbol;

    <span style="color:#5b9b4c">/**</span>
<span style="color:#5b9b4c">     * </span><span style="color:#389edb">@dev</span><span style="color:#5b9b4c"> Sets the values for {name} and {symbol}.</span>
<span style="color:#5b9b4c">     *</span>
<span style="color:#5b9b4c">     * The default value of {decimals} is 18. To select a different value for</span>
<span style="color:#5b9b4c">     * {decimals} you should overload it.</span>
<span style="color:#5b9b4c">     *</span>
<span style="color:#5b9b4c">     * All two of these values are immutable: they can only be set once during</span>
<span style="color:#5b9b4c">     * construction.</span>
<span style="color:#5b9b4c">     */</span>
    <span style="color:#389edb">constructor</span><span style="color:#ea68db">(</span><span style="color:#00ccaf">string </span><span style="color:#389edb">memory </span><span style="color:#88deff">name_</span>, <span style="color:#00ccaf">string </span><span style="color:#389edb">memory </span><span style="color:#88deff">symbol_</span><span style="color:#ea68db">) {</span>
        _name = name_;
        _symbol = symbol_;
    <span style="color:#ea68db">}</span>

    <span style="color:#5b9b4c">/**</span>
<span style="color:#5b9b4c">     * </span><span style="color:#389edb">@dev</span><span style="color:#5b9b4c"> Returns the name of the token.</span>
<span style="color:#5b9b4c">     */</span>
    <span style="color:#389edb">function </span><span style="color:#dcdca4">name</span><span style="color:#ea68db">() </span><span style="color:#389edb">public view virtual override </span><span style="color:#d082c4">returns </span><span style="color:#ea68db">(</span><span style="color:#00ccaf">string </span><span style="color:#389edb">memory</span><span style="color:#ea68db">) {</span>
        <span style="color:#d082c4">return </span>_name;
    <span style="color:#ea68db">}</span>

    <span style="color:#5b9b4c">/**</span>
<span style="color:#5b9b4c">     * </span><span style="color:#389edb">@dev</span><span style="color:#5b9b4c"> Returns the symbol of the token, usually a shorter version of the</span>
<span style="color:#5b9b4c">     * name.</span>
<span style="color:#5b9b4c">     */</span>
    <span style="color:#389edb">function </span><span style="color:#dcdca4">symbol</span><span style="color:#ea68db">() </span><span style="color:#389edb">public view virtual override </span><span style="color:#d082c4">returns </span><span style="color:#ea68db">(</span><span style="color:#00ccaf">string </span><span style="color:#389edb">memory</span><span style="color:#ea68db">) {</span>
        <span style="color:#d082c4">return </span>_symbol;
    <span style="color:#ea68db">}</span>

    <span style="color:#5b9b4c">/**</span>
<span style="color:#5b9b4c">     * </span><span style="color:#389edb">@dev</span><span style="color:#5b9b4c"> Returns the number of decimals used to get its user representation.</span>
<span style="color:#5b9b4c">     * For example, if `decimals` equals `2`, a balance of `505` tokens should</span>
<span style="color:#5b9b4c">     * be displayed to a user as `5.05` (`505 / 10 ** 2`).</span>
<span style="color:#5b9b4c">     *</span>
<span style="color:#5b9b4c">     * Tokens usually opt for a value of 18, imitating the relationship between</span>
<span style="color:#5b9b4c">     * Ether and Wei. This is the value {ERC20} uses, unless this function is</span>
<span style="color:#5b9b4c">     * overridden;</span>
<span style="color:#5b9b4c">     *</span>
<span style="color:#5b9b4c">     * NOTE: This information is only used for _display_ purposes: it in</span>
<span style="color:#5b9b4c">     * no way affects any of the arithmetic of the contract, including</span>
<span style="color:#5b9b4c">     * {IERC20-balanceOf} and {IERC20-transfer}.</span>
<span style="color:#5b9b4c">     */</span>
    <span style="color:#389edb">function </span><span style="color:#dcdca4">decimals</span><span style="color:#ea68db">() </span><span style="color:#389edb">public view virtual override </span><span style="color:#d082c4">returns </span><span style="color:#ea68db">(</span><span style="color:#00ccaf">uint8</span><span style="color:#ea68db">) {</span>
        <span style="color:#d082c4">return </span><span style="color:#afcfa4">18</span>;
    <span style="color:#ea68db">}</span>

    <span style="color:#5b9b4c">/**</span>
<span style="color:#5b9b4c">     * </span><span style="color:#389edb">@dev</span><span style="color:#5b9b4c"> See {IERC20-totalSupply}.</span>
<span style="color:#5b9b4c">     */</span>
    <span style="color:#389edb">function </span><span style="color:#dcdca4">totalSupply</span><span style="color:#ea68db">() </span><span style="color:#389edb">public view virtual override </span><span style="color:#d082c4">returns </span><span style="color:#ea68db">(</span><span style="color:#00ccaf">uint256</span><span style="color:#ea68db">) {</span>
        <span style="color:#d082c4">return </span>_totalSupply;
    <span style="color:#ea68db">}</span>

    <span style="color:#5b9b4c">/**</span>
<span style="color:#5b9b4c">     * </span><span style="color:#389edb">@dev</span><span style="color:#5b9b4c"> See {IERC20-balanceOf}.</span>
<span style="color:#5b9b4c">     */</span>
    <span style="color:#389edb">function </span><span style="color:#dcdca4">balanceOf</span><span style="color:#ea68db">(</span><span style="color:#00ccaf">address </span><span style="color:#88deff">account</span><span style="color:#ea68db">) </span><span style="color:#389edb">public view virtual override </span><span style="color:#d082c4">returns </span><span style="color:#ea68db">(</span><span style="color:#00ccaf">uint256</span><span style="color:#ea68db">) {</span>
        <span style="color:#d082c4">return </span>_balances<span style="color:#00a2ff">[</span>account<span style="color:#00a2ff">]</span>;
    <span style="color:#ea68db">}</span>

    <span style="color:#5b9b4c">/**</span>
<span style="color:#5b9b4c">     * </span><span style="color:#389edb">@dev</span><span style="color:#5b9b4c"> See {IERC20-transfer}.</span>
<span style="color:#5b9b4c">     *</span>
<span style="color:#5b9b4c">     * Requirements:</span>
<span style="color:#5b9b4c">     *</span>
<span style="color:#5b9b4c">     * - `to` cannot be the zero address.</span>
<span style="color:#5b9b4c">     * - the caller must have a balance of at least `amount`.</span>
<span style="color:#5b9b4c">     */</span>
    <span style="color:#389edb">function </span><span style="color:#dcdca4">transfer</span><span style="color:#ea68db">(</span><span style="color:#00ccaf">address </span><span style="color:#88deff">to</span>, <span style="color:#00ccaf">uint256 </span><span style="color:#88deff">amount</span><span style="color:#ea68db">) </span><span style="color:#389edb">public virtual override </span><span style="color:#d082c4">returns </span><span style="color:#ea68db">(</span><span style="color:#00ccaf">bool</span><span style="color:#ea68db">) {</span>
        <span style="color:#00ccaf">address </span>owner = <span style="color:#dcdca4">_msgSender</span><span style="color:#00a2ff">()</span>;
        <span style="color:#dcdca4">_transfer</span><span style="color:#00a2ff">(</span>owner, to, amount<span style="color:#00a2ff">)</span>;
        <span style="color:#d082c4">return </span><span style="color:#389edb">true</span>;
    <span style="color:#ea68db">}</span>

    <span style="color:#5b9b4c">/**</span>
<span style="color:#5b9b4c">     * </span><span style="color:#389edb">@dev</span><span style="color:#5b9b4c"> See {IERC20-allowance}.</span>
<span style="color:#5b9b4c">     */</span>
    <span style="color:#389edb">function </span><span style="color:#dcdca4">allowance</span><span style="color:#ea68db">(</span><span style="color:#00ccaf">address </span><span style="color:#88deff">owner</span>, <span style="color:#00ccaf">address </span><span style="color:#88deff">spender</span><span style="color:#ea68db">) </span><span style="color:#389edb">public view virtual override </span><span style="color:#d082c4">returns </span><span style="color:#ea68db">(</span><span style="color:#00ccaf">uint256</span><span style="color:#ea68db">) {</span>
        <span style="color:#d082c4">return </span>_allowances<span style="color:#00a2ff">[</span>owner<span style="color:#00a2ff">][</span>spender<span style="color:#00a2ff">]</span>;
    <span style="color:#ea68db">}</span>

    <span style="color:#5b9b4c">/**</span>
<span style="color:#5b9b4c">     * </span><span style="color:#389edb">@dev</span><span style="color:#5b9b4c"> See {IERC20-approve}.</span>
<span style="color:#5b9b4c">     *</span>
<span style="color:#5b9b4c">     * NOTE: If `amount` is the maximum `uint256`, the allowance is not updated on</span>
<span style="color:#5b9b4c">     * `transferFrom`. This is semantically equivalent to an infinite approval.</span>
<span style="color:#5b9b4c">     *</span>
<span style="color:#5b9b4c">     * Requirements:</span>
<span style="color:#5b9b4c">     *</span>
<span style="color:#5b9b4c">     * - `spender` cannot be the zero address.</span>
<span style="color:#5b9b4c">     */</span>
    <span style="color:#389edb">function </span><span style="color:#dcdca4">approve</span><span style="color:#ea68db">(</span><span style="color:#00ccaf">address </span><span style="color:#88deff">spender</span>, <span style="color:#00ccaf">uint256 </span><span style="color:#88deff">amount</span><span style="color:#ea68db">) </span><span style="color:#389edb">public virtual override </span><span style="color:#d082c4">returns </span><span style="color:#ea68db">(</span><span style="color:#00ccaf">bool</span><span style="color:#ea68db">) {</span>
        <span style="color:#00ccaf">address </span>owner = <span style="color:#dcdca4">_msgSender</span><span style="color:#00a2ff">()</span>;
        <span style="color:#dcdca4">_approve</span><span style="color:#00a2ff">(</span>owner, spender, amount<span style="color:#00a2ff">)</span>;
        <span style="color:#d082c4">return </span><span style="color:#389edb">true</span>;
    <span style="color:#ea68db">}</span>

    <span style="color:#5b9b4c">/**</span>
<span style="color:#5b9b4c">     * </span><span style="color:#389edb">@dev</span><span style="color:#5b9b4c"> See {IERC20-transferFrom}.</span>
<span style="color:#5b9b4c">     *</span>
<span style="color:#5b9b4c">     * Emits an {Approval} event indicating the updated allowance. This is not</span>
<span style="color:#5b9b4c">     * required by the EIP. See the note at the beginning of {ERC20}.</span>
<span style="color:#5b9b4c">     *</span>
<span style="color:#5b9b4c">     * NOTE: Does not update the allowance if the current allowance</span>
<span style="color:#5b9b4c">     * is the maximum `uint256`.</span>
<span style="color:#5b9b4c">     *</span>
<span style="color:#5b9b4c">     * Requirements:</span>
<span style="color:#5b9b4c">     *</span>
<span style="color:#5b9b4c">     * - `from` and `to` cannot be the zero address.</span>
<span style="color:#5b9b4c">     * - `from` must have a balance of at least `amount`.</span>
<span style="color:#5b9b4c">     * - the caller must have allowance for ``from``'s tokens of at least</span>
<span style="color:#5b9b4c">     * `amount`.</span>
<span style="color:#5b9b4c">     */</span>
    <span style="color:#389edb">function </span><span style="color:#dcdca4">transferFrom</span><span style="color:#ea68db">(</span>
        <span style="color:#00ccaf">address </span><span style="color:#88deff">from</span>,
        <span style="color:#00ccaf">address </span><span style="color:#88deff">to</span>,
        <span style="color:#00ccaf">uint256 </span><span style="color:#88deff">amount</span>
    <span style="color:#ea68db">) </span><span style="color:#389edb">public virtual override </span><span style="color:#d082c4">returns </span><span style="color:#ea68db">(</span><span style="color:#00ccaf">bool</span><span style="color:#ea68db">) {</span>
        <span style="color:#00ccaf">address </span>spender = <span style="color:#dcdca4">_msgSender</span><span style="color:#00a2ff">()</span>;
        <span style="color:#dcdca4">_spendAllowance</span><span style="color:#00a2ff">(</span>from, spender, amount<span style="color:#00a2ff">)</span>;
        <span style="color:#dcdca4">_transfer</span><span style="color:#00a2ff">(</span>from, to, amount<span style="color:#00a2ff">)</span>;
        <span style="color:#d082c4">return </span><span style="color:#389edb">true</span>;
    <span style="color:#ea68db">}</span>

    <span style="color:#5b9b4c">/**</span>
<span style="color:#5b9b4c">     * </span><span style="color:#389edb">@dev</span><span style="color:#5b9b4c"> Atomically increases the allowance granted to `spender` by the caller.</span>
<span style="color:#5b9b4c">     *</span>
<span style="color:#5b9b4c">     * This is an alternative to {approve} that can be used as a mitigation for</span>
<span style="color:#5b9b4c">     * problems described in {IERC20-approve}.</span>
<span style="color:#5b9b4c">     *</span>
<span style="color:#5b9b4c">     * Emits an {Approval} event indicating the updated allowance.</span>
<span style="color:#5b9b4c">     *</span>
<span style="color:#5b9b4c">     * Requirements:</span>
<span style="color:#5b9b4c">     *</span>
<span style="color:#5b9b4c">     * - `spender` cannot be the zero address.</span>
<span style="color:#5b9b4c">     */</span>
    <span style="color:#389edb">function </span><span style="color:#dcdca4">increaseAllowance</span><span style="color:#ea68db">(</span><span style="color:#00ccaf">address </span><span style="color:#88deff">spender</span>, <span style="color:#00ccaf">uint256 </span><span style="color:#88deff">addedValue</span><span style="color:#ea68db">) </span><span style="color:#389edb">public virtual </span><span style="color:#d082c4">returns </span><span style="color:#ea68db">(</span><span style="color:#00ccaf">bool</span><span style="color:#ea68db">) {</span>
        <span style="color:#00ccaf">address </span>owner = <span style="color:#dcdca4">_msgSender</span><span style="color:#00a2ff">()</span>;
        <span style="color:#dcdca4">_approve</span><span style="color:#00a2ff">(</span>owner, spender, <span style="color:#dcdca4">allowance</span><span style="color:#ffd500">(</span>owner, spender<span style="color:#ffd500">) </span>+ addedValue<span style="color:#00a2ff">)</span>;
        <span style="color:#d082c4">return </span><span style="color:#389edb">true</span>;
    <span style="color:#ea68db">}</span>

    <span style="color:#5b9b4c">/**</span>
<span style="color:#5b9b4c">     * </span><span style="color:#389edb">@dev</span><span style="color:#5b9b4c"> Atomically decreases the allowance granted to `spender` by the caller.</span>
<span style="color:#5b9b4c">     *</span>
<span style="color:#5b9b4c">     * This is an alternative to {approve} that can be used as a mitigation for</span>
<span style="color:#5b9b4c">     * problems described in {IERC20-approve}.</span>
<span style="color:#5b9b4c">     *</span>
<span style="color:#5b9b4c">     * Emits an {Approval} event indicating the updated allowance.</span>
<span style="color:#5b9b4c">     *</span>
<span style="color:#5b9b4c">     * Requirements:</span>
<span style="color:#5b9b4c">     *</span>
<span style="color:#5b9b4c">     * - `spender` cannot be the zero address.</span>
<span style="color:#5b9b4c">     * - `spender` must have allowance for the caller of at least</span>
<span style="color:#5b9b4c">     * `subtractedValue`.</span>
<span style="color:#5b9b4c">     */</span>
    <span style="color:#389edb">function </span><span style="color:#dcdca4">decreaseAllowance</span><span style="color:#ea68db">(</span><span style="color:#00ccaf">address </span><span style="color:#88deff">spender</span>, <span style="color:#00ccaf">uint256 </span><span style="color:#88deff">subtractedValue</span><span style="color:#ea68db">) </span><span style="color:#389edb">public virtual </span><span style="color:#d082c4">returns </span><span style="color:#ea68db">(</span><span style="color:#00ccaf">bool</span><span style="color:#ea68db">) {</span>
        <span style="color:#00ccaf">address </span>owner = <span style="color:#dcdca4">_msgSender</span><span style="color:#00a2ff">()</span>;
        <span style="color:#00ccaf">uint256 </span>currentAllowance = <span style="color:#dcdca4">allowance</span><span style="color:#00a2ff">(</span>owner, spender<span style="color:#00a2ff">)</span>;
        <span style="color:#dcdca4">require</span><span style="color:#00a2ff">(</span>currentAllowance &gt;= subtractedValue, <span style="color:#d98e73">"ERC20: decreased allowance below zero"</span><span style="color:#00a2ff">)</span>;
        <span style="color:#389edb">unchecked </span><span style="color:#00a2ff">{</span>
            <span style="color:#dcdca4">_approve</span><span style="color:#ffd500">(</span>owner, spender, currentAllowance - subtractedValue<span style="color:#ffd500">)</span>;
        <span style="color:#00a2ff">}</span>

        <span style="color:#d082c4">return </span><span style="color:#389edb">true</span>;
    <span style="color:#ea68db">}</span>

    <span style="color:#5b9b4c">/**</span>
<span style="color:#5b9b4c">     * </span><span style="color:#389edb">@dev</span><span style="color:#5b9b4c"> Moves `amount` of tokens from `sender` to `recipient`.</span>
<span style="color:#5b9b4c">     *</span>
<span style="color:#5b9b4c">     * This internal function is equivalent to {transfer}, and can be used to</span>
<span style="color:#5b9b4c">     * e.g. implement automatic token fees, slashing mechanisms, etc.</span>
<span style="color:#5b9b4c">     *</span>
<span style="color:#5b9b4c">     * Emits a {Transfer} event.</span>
<span style="color:#5b9b4c">     *</span>
<span style="color:#5b9b4c">     * Requirements:</span>
<span style="color:#5b9b4c">     *</span>
<span style="color:#5b9b4c">     * - `from` cannot be the zero address.</span>
<span style="color:#5b9b4c">     * - `to` cannot be the zero address.</span>
<span style="color:#5b9b4c">     * - `from` must have a balance of at least `amount`.</span>
<span style="color:#5b9b4c">     */</span>
    <span style="color:#389edb">function </span><span style="color:#dcdca4">_transfer</span><span style="color:#ea68db">(</span>
        <span style="color:#00ccaf">address </span><span style="color:#88deff">from</span>,
        <span style="color:#00ccaf">address </span><span style="color:#88deff">to</span>,
        <span style="color:#00ccaf">uint256 </span><span style="color:#88deff">amount</span>
    <span style="color:#ea68db">) </span><span style="color:#389edb">internal virtual </span><span style="color:#ea68db">{</span>
        <span style="color:#dcdca4">require</span><span style="color:#00a2ff">(</span>from != <span style="color:#00ccaf">address</span><span style="color:#ffd500">(</span><span style="color:#afcfa4">0</span><span style="color:#ffd500">)</span>, <span style="color:#d98e73">"ERC20: transfer from the zero address"</span><span style="color:#00a2ff">)</span>;
        <span style="color:#dcdca4">require</span><span style="color:#00a2ff">(</span>to != <span style="color:#00ccaf">address</span><span style="color:#ffd500">(</span><span style="color:#afcfa4">0</span><span style="color:#ffd500">)</span>, <span style="color:#d98e73">"ERC20: transfer to the zero address"</span><span style="color:#00a2ff">)</span>;

        <span style="color:#dcdca4">_beforeTokenTransfer</span><span style="color:#00a2ff">(</span>from, to, amount<span style="color:#00a2ff">)</span>;

        <span style="color:#00ccaf">uint256 </span>fromBalance = _balances<span style="color:#00a2ff">[</span>from<span style="color:#00a2ff">]</span>;
        <span style="color:#dcdca4">require</span><span style="color:#00a2ff">(</span>fromBalance &gt;= amount, <span style="color:#d98e73">"ERC20: transfer amount exceeds balance"</span><span style="color:#00a2ff">)</span>;
        <span style="color:#389edb">unchecked </span><span style="color:#00a2ff">{</span>
            _balances<span style="color:#ffd500">[</span>from<span style="color:#ffd500">] </span>= fromBalance - amount;
        <span style="color:#00a2ff">}</span>
        _balances<span style="color:#00a2ff">[</span>to<span style="color:#00a2ff">] </span>+= amount;

        <span style="color:#389edb">emit </span><span style="color:#dcdca4">Transfer</span><span style="color:#00a2ff">(</span>from, to, amount<span style="color:#00a2ff">)</span>;

        <span style="color:#dcdca4">_afterTokenTransfer</span><span style="color:#00a2ff">(</span>from, to, amount<span style="color:#00a2ff">)</span>;
    <span style="color:#ea68db">}</span>

    <span style="color:#5b9b4c">/** </span><span style="color:#389edb">@dev</span><span style="color:#5b9b4c"> Creates `amount` tokens and assigns them to `account`, increasing</span>
<span style="color:#5b9b4c">     * the total supply.</span>
<span style="color:#5b9b4c">     *</span>
<span style="color:#5b9b4c">     * Emits a {Transfer} event with `from` set to the zero address.</span>
<span style="color:#5b9b4c">     *</span>
<span style="color:#5b9b4c">     * Requirements:</span>
<span style="color:#5b9b4c">     *</span>
<span style="color:#5b9b4c">     * - `account` cannot be the zero address.</span>
<span style="color:#5b9b4c">     */</span>
    <span style="color:#389edb">function </span><span style="color:#dcdca4">_mint</span><span style="color:#ea68db">(</span><span style="color:#00ccaf">address </span><span style="color:#88deff">account</span>, <span style="color:#00ccaf">uint256 </span><span style="color:#88deff">amount</span><span style="color:#ea68db">) </span><span style="color:#389edb">internal virtual </span><span style="color:#ea68db">{</span>
        <span style="color:#dcdca4">require</span><span style="color:#00a2ff">(</span>account != <span style="color:#00ccaf">address</span><span style="color:#ffd500">(</span><span style="color:#afcfa4">0</span><span style="color:#ffd500">)</span>, <span style="color:#d98e73">"ERC20: mint to the zero address"</span><span style="color:#00a2ff">)</span>;

        <span style="color:#dcdca4">_beforeTokenTransfer</span><span style="color:#00a2ff">(</span><span style="color:#00ccaf">address</span><span style="color:#ffd500">(</span><span style="color:#afcfa4">0</span><span style="color:#ffd500">)</span>, account, amount<span style="color:#00a2ff">)</span>;

        _totalSupply += amount;
        _balances<span style="color:#00a2ff">[</span>account<span style="color:#00a2ff">] </span>+= amount;
        <span style="color:#389edb">emit </span><span style="color:#dcdca4">Transfer</span><span style="color:#00a2ff">(</span><span style="color:#00ccaf">address</span><span style="color:#ffd500">(</span><span style="color:#afcfa4">0</span><span style="color:#ffd500">)</span>, account, amount<span style="color:#00a2ff">)</span>;

        <span style="color:#dcdca4">_afterTokenTransfer</span><span style="color:#00a2ff">(</span><span style="color:#00ccaf">address</span><span style="color:#ffd500">(</span><span style="color:#afcfa4">0</span><span style="color:#ffd500">)</span>, account, amount<span style="color:#00a2ff">)</span>;
    <span style="color:#ea68db">}</span>

    <span style="color:#5b9b4c">/**</span>
<span style="color:#5b9b4c">     * </span><span style="color:#389edb">@dev</span><span style="color:#5b9b4c"> Destroys `amount` tokens from `account`, reducing the</span>
<span style="color:#5b9b4c">     * total supply.</span>
<span style="color:#5b9b4c">     *</span>
<span style="color:#5b9b4c">     * Emits a {Transfer} event with `to` set to the zero address.</span>
<span style="color:#5b9b4c">     *</span>
<span style="color:#5b9b4c">     * Requirements:</span>
<span style="color:#5b9b4c">     *</span>
<span style="color:#5b9b4c">     * - `account` cannot be the zero address.</span>
<span style="color:#5b9b4c">     * - `account` must have at least `amount` tokens.</span>
<span style="color:#5b9b4c">     */</span>
    <span style="color:#389edb">function </span><span style="color:#dcdca4">_burn</span><span style="color:#ea68db">(</span><span style="color:#00ccaf">address </span><span style="color:#88deff">account</span>, <span style="color:#00ccaf">uint256 </span><span style="color:#88deff">amount</span><span style="color:#ea68db">) </span><span style="color:#389edb">internal virtual </span><span style="color:#ea68db">{</span>
        <span style="color:#dcdca4">require</span><span style="color:#00a2ff">(</span>account != <span style="color:#00ccaf">address</span><span style="color:#ffd500">(</span><span style="color:#afcfa4">0</span><span style="color:#ffd500">)</span>, <span style="color:#d98e73">"ERC20: burn from the zero address"</span><span style="color:#00a2ff">)</span>;

        <span style="color:#dcdca4">_beforeTokenTransfer</span><span style="color:#00a2ff">(</span>account, <span style="color:#00ccaf">address</span><span style="color:#ffd500">(</span><span style="color:#afcfa4">0</span><span style="color:#ffd500">)</span>, amount<span style="color:#00a2ff">)</span>;

        <span style="color:#00ccaf">uint256 </span>accountBalance = _balances<span style="color:#00a2ff">[</span>account<span style="color:#00a2ff">]</span>;
        <span style="color:#dcdca4">require</span><span style="color:#00a2ff">(</span>accountBalance &gt;= amount, <span style="color:#d98e73">"ERC20: burn amount exceeds balance"</span><span style="color:#00a2ff">)</span>;
        <span style="color:#389edb">unchecked </span><span style="color:#00a2ff">{</span>
            _balances<span style="color:#ffd500">[</span>account<span style="color:#ffd500">] </span>= accountBalance - amount;
        <span style="color:#00a2ff">}</span>
        _totalSupply -= amount;

        <span style="color:#389edb">emit </span><span style="color:#dcdca4">Transfer</span><span style="color:#00a2ff">(</span>account, <span style="color:#00ccaf">address</span><span style="color:#ffd500">(</span><span style="color:#afcfa4">0</span><span style="color:#ffd500">)</span>, amount<span style="color:#00a2ff">)</span>;

        <span style="color:#dcdca4">_afterTokenTransfer</span><span style="color:#00a2ff">(</span>account, <span style="color:#00ccaf">address</span><span style="color:#ffd500">(</span><span style="color:#afcfa4">0</span><span style="color:#ffd500">)</span>, amount<span style="color:#00a2ff">)</span>;
    <span style="color:#ea68db">}</span>

    <span style="color:#5b9b4c">/**</span>
<span style="color:#5b9b4c">     * </span><span style="color:#389edb">@dev</span><span style="color:#5b9b4c"> Sets `amount` as the allowance of `spender` over the `owner` s tokens.</span>
<span style="color:#5b9b4c">     *</span>
<span style="color:#5b9b4c">     * This internal function is equivalent to `approve`, and can be used to</span>
<span style="color:#5b9b4c">     * e.g. set automatic allowances for certain subsystems, etc.</span>
<span style="color:#5b9b4c">     *</span>
<span style="color:#5b9b4c">     * Emits an {Approval} event.</span>
<span style="color:#5b9b4c">     *</span>
<span style="color:#5b9b4c">     * Requirements:</span>
<span style="color:#5b9b4c">     *</span>
<span style="color:#5b9b4c">     * - `owner` cannot be the zero address.</span>
<span style="color:#5b9b4c">     * - `spender` cannot be the zero address.</span>
<span style="color:#5b9b4c">     */</span>
    <span style="color:#389edb">function </span><span style="color:#dcdca4">_approve</span><span style="color:#ea68db">(</span>
        <span style="color:#00ccaf">address </span><span style="color:#88deff">owner</span>,
        <span style="color:#00ccaf">address </span><span style="color:#88deff">spender</span>,
        <span style="color:#00ccaf">uint256 </span><span style="color:#88deff">amount</span>
    <span style="color:#ea68db">) </span><span style="color:#389edb">internal virtual </span><span style="color:#ea68db">{</span>
        <span style="color:#dcdca4">require</span><span style="color:#00a2ff">(</span>owner != <span style="color:#00ccaf">address</span><span style="color:#ffd500">(</span><span style="color:#afcfa4">0</span><span style="color:#ffd500">)</span>, <span style="color:#d98e73">"ERC20: approve from the zero address"</span><span style="color:#00a2ff">)</span>;
        <span style="color:#dcdca4">require</span><span style="color:#00a2ff">(</span>spender != <span style="color:#00ccaf">address</span><span style="color:#ffd500">(</span><span style="color:#afcfa4">0</span><span style="color:#ffd500">)</span>, <span style="color:#d98e73">"ERC20: approve to the zero address"</span><span style="color:#00a2ff">)</span>;

        _allowances<span style="color:#00a2ff">[</span>owner<span style="color:#00a2ff">][</span>spender<span style="color:#00a2ff">] </span>= amount;
        <span style="color:#389edb">emit </span><span style="color:#dcdca4">Approval</span><span style="color:#00a2ff">(</span>owner, spender, amount<span style="color:#00a2ff">)</span>;
    <span style="color:#ea68db">}</span>

    <span style="color:#5b9b4c">/**</span>
<span style="color:#5b9b4c">     * </span><span style="color:#389edb">@dev</span><span style="color:#5b9b4c"> Updates `owner` s allowance for `spender` based on spent `amount`.</span>
<span style="color:#5b9b4c">     *</span>
<span style="color:#5b9b4c">     * Does not update the allowance amount in case of infinite allowance.</span>
<span style="color:#5b9b4c">     * Revert if not enough allowance is available.</span>
<span style="color:#5b9b4c">     *</span>
<span style="color:#5b9b4c">     * Might emit an {Approval} event.</span>
<span style="color:#5b9b4c">     */</span>
    <span style="color:#389edb">function </span><span style="color:#dcdca4">_spendAllowance</span><span style="color:#ea68db">(</span>
        <span style="color:#00ccaf">address </span><span style="color:#88deff">owner</span>,
        <span style="color:#00ccaf">address </span><span style="color:#88deff">spender</span>,
        <span style="color:#00ccaf">uint256 </span><span style="color:#88deff">amount</span>
    <span style="color:#ea68db">) </span><span style="color:#389edb">internal virtual </span><span style="color:#ea68db">{</span>
        <span style="color:#00ccaf">uint256 </span>currentAllowance = <span style="color:#dcdca4">allowance</span><span style="color:#00a2ff">(</span>owner, spender<span style="color:#00a2ff">)</span>;
        <span style="color:#d082c4">if </span><span style="color:#00a2ff">(</span>currentAllowance != <span style="color:#dcdca4">type</span><span style="color:#ffd500">(</span><span style="color:#00ccaf">uint256</span><span style="color:#ffd500">)</span>.max<span style="color:#00a2ff">) {</span>
            <span style="color:#dcdca4">require</span><span style="color:#ffd500">(</span>currentAllowance &gt;= amount, <span style="color:#d98e73">"ERC20: insufficient allowance"</span><span style="color:#ffd500">)</span>;
            <span style="color:#389edb">unchecked </span><span style="color:#ffd500">{</span>
                <span style="color:#dcdca4">_approve</span><span style="color:#ea68db">(</span>owner, spender, currentAllowance - amount<span style="color:#ea68db">)</span>;
            <span style="color:#ffd500">}</span>
        <span style="color:#00a2ff">}</span>
    <span style="color:#ea68db">}</span>

    <span style="color:#5b9b4c">/**</span>
<span style="color:#5b9b4c">     * </span><span style="color:#389edb">@dev</span><span style="color:#5b9b4c"> Hook that is called before any transfer of tokens. This includes</span>
<span style="color:#5b9b4c">     * minting and burning.</span>
<span style="color:#5b9b4c">     *</span>
<span style="color:#5b9b4c">     * Calling conditions:</span>
<span style="color:#5b9b4c">     *</span>
<span style="color:#5b9b4c">     * - when `from` and `to` are both non-zero, `amount` of ``from``'s tokens</span>
<span style="color:#5b9b4c">     * will be transferred to `to`.</span>
<span style="color:#5b9b4c">     * - when `from` is zero, `amount` tokens will be minted for `to`.</span>
<span style="color:#5b9b4c">     * - when `to` is zero, `amount` of ``from``'s tokens will be burned.</span>
<span style="color:#5b9b4c">     * - `from` and `to` are never both zero.</span>
<span style="color:#5b9b4c">     *</span>
<span style="color:#5b9b4c">     * To learn more about hooks, head to xref:ROOT:extending-contracts.adoc#using-hooks[Using Hooks].</span>
<span style="color:#5b9b4c">     */</span>
    <span style="color:#389edb">function </span><span style="color:#dcdca4">_beforeTokenTransfer</span><span style="color:#ea68db">(</span>
        <span style="color:#00ccaf">address </span><span style="color:#88deff">from</span>,
        <span style="color:#00ccaf">address </span><span style="color:#88deff">to</span>,
        <span style="color:#00ccaf">uint256 </span><span style="color:#88deff">amount</span>
    <span style="color:#ea68db">) </span><span style="color:#389edb">internal virtual </span><span style="color:#ea68db">{}</span>

    <span style="color:#5b9b4c">/**</span>
<span style="color:#5b9b4c">     * </span><span style="color:#389edb">@dev</span><span style="color:#5b9b4c"> Hook that is called after any transfer of tokens. This includes</span>
<span style="color:#5b9b4c">     * minting and burning.</span>
<span style="color:#5b9b4c">     *</span>
<span style="color:#5b9b4c">     * Calling conditions:</span>
<span style="color:#5b9b4c">     *</span>
<span style="color:#5b9b4c">     * - when `from` and `to` are both non-zero, `amount` of ``from``'s tokens</span>
<span style="color:#5b9b4c">     * has been transferred to `to`.</span>
<span style="color:#5b9b4c">     * - when `from` is zero, `amount` tokens have been minted for `to`.</span>
<span style="color:#5b9b4c">     * - when `to` is zero, `amount` of ``from``'s tokens have been burned.</span>
<span style="color:#5b9b4c">     * - `from` and `to` are never both zero.</span>
<span style="color:#5b9b4c">     *</span>
<span style="color:#5b9b4c">     * To learn more about hooks, head to xref:ROOT:extending-contracts.adoc#using-hooks[Using Hooks].</span>
<span style="color:#5b9b4c">     */</span>
    <span style="color:#389edb">function </span><span style="color:#dcdca4">_afterTokenTransfer</span><span style="color:#ea68db">(</span>
        <span style="color:#00ccaf">address </span><span style="color:#88deff">from</span>,
        <span style="color:#00ccaf">address </span><span style="color:#88deff">to</span>,
        <span style="color:#00ccaf">uint256 </span><span style="color:#88deff">amount</span>
    <span style="color:#ea68db">) </span><span style="color:#389edb">internal virtual </span><span style="color:#ea68db">{}</span>
<span style="color:#ffd500">}</span></div></div><div style="position:absolute;left:2588.0px;top:296px;width:16px;height:1905px;background:linear-gradient(270deg,rgba(0,0,0,.5),rgba(0,0,0,0))"></div><div style="position:absolute;left:2757.50px;top:1768.00px;width:2.00px;height:30.00px;background:#b45cb4;"></div><div style="position:absolute;left:2757.50px;top:2184.00px;width:2.00px;height:17.00px;background:#b45cb4;"></div><div style="position:absolute;left:2759.50px;top:296.00px;width:1.50px;height:1905.00px;background:#3a3a3a;"></div><div style="position:absolute;left:2761.00px;top:445.50px;width:39.20px;height:164.10px;background:#424242;"></div><div style="position:absolute;left:2761.00px;top:516.00px;width:39.20px;height:5.50px;background:#7f7f7f;"></div><div style="position:absolute;left:2786.00px;top:1210.00px;width:14.20px;height:16.00px;background:#d3a500;"></div><div style="position:absolute;left:2786.00px;top:1334.00px;width:14.20px;height:16.00px;background:#d3a500;"></div><div style="position:absolute;left:2786.00px;top:1361.00px;width:14.20px;height:16.00px;background:#d3a500;"></div><div style="position:absolute;left:2786.00px;top:1560.00px;width:14.20px;height:16.00px;background:#d3a500;"></div><div style="position:absolute;left:2786.00px;top:1583.00px;width:14.20px;height:16.00px;background:#d3a500;"></div><div style="position:absolute;left:2786.00px;top:1716.00px;width:14.20px;height:16.00px;background:#d3a500;"></div><div style="position:absolute;left:2786.00px;top:1927.00px;width:14.20px;height:16.00px;background:#d3a500;"></div><div style="position:absolute;left:2786.00px;top:2018.00px;width:14.20px;height:16.00px;background:#d3a500;"></div><svg style="left:140.00px;top:2210.00px" width="45.00" height="45.00" viewBox="0 0 45.00 45.00" fill="none"><path d="M9 17L21 27L9 38" stroke="#fff" stroke-width="3"/><path d="M33 6.5L21.5 16.5L33 27" stroke="#fff" stroke-width="3"/></svg><svg style="left:234.90px;top:2214.70px" width="36.00" height="36.00" viewBox="0 0 36.00 36.00" fill="none"><circle cx="18" cy="18" r="15.6" stroke="#fff" stroke-width="2.8"/><path d="M11.2 11.2L24.8 24.8M24.8 11.2L11.2 24.8" stroke="#fff" stroke-width="2.8"/></svg><svg style="left:317.00px;top:2214.00px" width="36.00" height="36.00" viewBox="0 0 36.00 36.00" fill="none"><path d="M17.7 2.6L33.6 32.6H1.8Z" stroke="#fff" stroke-width="2.8" stroke-linejoin="round"/><path d="M17.7 12.5V23" stroke="#fff" stroke-width="3"/><circle cx="17.7" cy="27.3" r="1.9" fill="#fff"/></svg><svg style="left:450.50px;top:2214.50px" width="37.61" height="37.61" viewBox="0 0 69 69" fill="none"><path d="M67 22.2L43 3.2V13.8C26 14 8.5 22 2.8 45.5C14 33 27 30 43 29.6V40Z" stroke="#fff" stroke-width="5.20" stroke-linejoin="round"/><circle cx="29" cy="56.2" r="10.5" stroke="#fff" stroke-width="5.72"/></svg><svg style="left:2412.00px;top:2217.00px" width="40.00" height="32.00" viewBox="0 0 40.00 32.00" fill="none"><path d="M1.1 16.6L9.3 27.2L10.9 25.7" stroke="#fff" stroke-width="2.7"/><path d="M11.4 16.6L19 27.2L38.7 4" stroke="#fff" stroke-width="2.7" stroke-linejoin="miter"/><path d="M17.7 16.2L28.4 4" stroke="#fff" stroke-width="2.7"/></svg><svg style="left:2631.00px;top:2214.00px" width="38.00" height="38.00" viewBox="0 0 38.00 38.00" fill="none"><path d="M10.4 7.6V2.3H35.2V17.9H30L25.4 23.6V18H23.2" stroke="#fff" stroke-width="2.6" stroke-linejoin="miter"/><circle cx="12.6" cy="17.5" r="6.4" stroke="#fff" stroke-width="2.6"/><path d="M1.6 37C1.6 30 6.4 25.3 12.6 25.3C18.8 25.3 23.6 30 23.6 37" stroke="#fff" stroke-width="2.6"/></svg><svg style="left:2719.00px;top:2213.00px" width="34.00" height="40.00" viewBox="0 0 34.00 40.00" fill="none"><path d="M3.2 31C3.2 31 5.8 25 5.8 16.5C5.8 8.5 10.5 3.6 16.8 3.6C23.1 3.6 27.8 8.5 27.8 16.5C27.8 25 30.4 31 30.4 31Z" stroke="#fff" stroke-width="2.6" stroke-linejoin="round"/><path d="M12.8 32C12.8 34.6 14.6 36.5 16.8 36.5C19 36.5 20.8 34.6 20.8 32" stroke="#fff" stroke-width="2.6"/></svg><div style="position:absolute;left:111.50px;top:132.00px;width:6.00px;height:138.00px;background:#ffffff;"></div><svg style="left:145.00px;top:160.00px" width="80.00" height="80.00" viewBox="0 0 80.00 80.00" fill="none"><path d="M52.8 9.6H27.3a3 3 0 0 0-3 3V53.2a3 3 0 0 0 3 3H59.5a3 3 0 0 0 3-3V20.2Z" stroke="#fff" stroke-width="5" stroke-linejoin="round"/>
<path d="M50.6 9.6V24H62.5" stroke="#fff" stroke-width="5"/>
<path d="M24.3 26.2H10a3 3 0 0 0-3 3V70.5a3 3 0 0 0 3 3H42.2a3 3 0 0 0 3-3V56.2" stroke="#fff" stroke-width="5"/></svg><svg style="left:140.00px;top:295.00px" width="90.00" height="90.00" viewBox="0 0 90.00 90.00" fill="none"><circle cx="50.4" cy="33.2" r="21.4" stroke="#858585" stroke-width="4.7"/><path d="M35.2 48.8L11.8 76" stroke="#858585" stroke-width="4.9"/></svg><svg style="left:140.00px;top:430.00px" width="90.00" height="90.00" viewBox="0 0 90.00 90.00" fill="none"><circle cx="26" cy="23.4" r="8.6" stroke="#858585" stroke-width="4.5"/><circle cx="56.3" cy="36.5" r="8.6" stroke="#858585" stroke-width="4.5"/><circle cx="26" cy="71.3" r="8.6" stroke="#858585" stroke-width="4.5"/><path d="M26 32V62.7" stroke="#858585" stroke-width="4.5"/><path d="M54.5 45.2C53 52.5 48 53.6 42 53.6H37C31 53.6 27.5 57 26.6 62" stroke="#858585" stroke-width="4.5"/></svg><svg style="left:140.00px;top:570.00px" width="90.00" height="90.00" viewBox="0 0 90.00 90.00" fill="none"><path d="M30 42V12.7L73.7 40L45.8 58.6" stroke="#858585" stroke-width="4.4" stroke-linejoin="miter"/><ellipse cx="23.8" cy="63" rx="10.4" ry="15" stroke="#858585" stroke-width="4.4"/><path d="M13.6 58.6H34" stroke="#858585" stroke-width="4.4"/><path d="M6.5 65H13.4M34.2 65H41M7.5 50.5L15 57M40 50.5L32.6 57M7.5 79.5L15.5 72.5M40 79.5L32 72.5" stroke="#858585" stroke-width="4.4"/></svg><svg style="left:140.00px;top:715.00px" width="90.00" height="90.00" viewBox="0 0 90.00 90.00" fill="none"><path d="M68.6 36V15.2a3 3 0 0 0-3-3H13.3a3 3 0 0 0-3 3V54.4a3 3 0 0 0 3 3H35" stroke="#858585" stroke-width="4.8"/><path d="M21.7 66.3H38" stroke="#858585" stroke-width="4.8"/><circle cx="57.9" cy="55" r="15.6" stroke="#858585" stroke-width="4.6"/><path d="M50.6 53.2L55.1 57.7L51 63.2" stroke="#858585" stroke-width="3.4"/><path d="M66.2 48.7L61.7 53.2L66.2 58" stroke="#858585" stroke-width="3.4"/></svg><svg style="left:140.00px;top:850.00px" width="90.00" height="90.00" viewBox="0 0 90.00 90.00" fill="none"><rect x="47.4" y="10.3" width="26.2" height="25.4" rx="3" stroke="#858585" stroke-width="4.5"/><path d="M11.6 23.3H31.7a3 3 0 0 1 3 3V49H57.4a3 3 0 0 1 3 3V71.7a3 3 0 0 1-3 3H11.6a3 3 0 0 1-3-3V26.3a3 3 0 0 1 3-3Z" stroke="#858585" stroke-width="4.5"/><path d="M8.6 49H34.7V74.7" stroke="#858585" stroke-width="4.5"/></svg><svg style="left:145.50px;top:995.50px" width="69.00" height="69.00" viewBox="0 0 69 69" fill="none"><path d="M67 22.2L43 3.2V13.8C26 14 8.5 22 2.8 45.5C14 33 27 30 43 29.6V40Z" stroke="#858585" stroke-width="5.00" stroke-linejoin="round"/><circle cx="29" cy="56.2" r="10.5" stroke="#858585" stroke-width="5.50"/></svg><svg style="left:141.00px;top:1954.50px" width="80.00" height="80.00" viewBox="0 0 80.00 80.00" fill="none"><circle cx="40" cy="40" r="32.4" stroke="#858585" stroke-width="4.5"/><circle cx="40" cy="32.2" r="14" stroke="#858585" stroke-width="4.5"/><path d="M19 64.5C22 53 30 47 40 47C50 47 58 53 61 64.5" stroke="#858585" stroke-width="4.5"/></svg><svg style="left:141.00px;top:2092.20px" width="80.00" height="80.00" viewBox="0 0 80.00 80.00" fill="none"><path d="M34.6 17.0L35.5 7.7L44.5 7.7L45.4 17.0L52.4 19.9L59.7 14.0L66.0 20.3L60.1 27.6L63.0 34.6L72.3 35.5L72.3 44.5L63.0 45.4L60.1 52.4L66.0 59.7L59.7 66.0L52.4 60.1L45.4 63.0L44.5 72.3L35.5 72.3L34.6 63.0L27.6 60.1L20.3 66.0L14.0 59.7L19.9 52.4L17.0 45.4L7.7 44.5L7.7 35.5L17.0 34.6L19.9 27.6L14.0 20.3L20.3 14.0L27.6 19.9Z" stroke="#858585" stroke-width="4.6" stroke-linejoin="miter"/><circle cx="40" cy="40" r="7.8" stroke="#858585" stroke-width="4.6"/></svg>
<div class="t" id="t0" style="left:1290.40px;top:64.30px;height:80.00px;line-height:80.00px;font-size:25.46px;color:#cccccc;letter-spacing:-0.206px;">ERC20.sol — optimism-erc20</div><div class="t" id="t1" style="left:308.00px;top:142.80px;height:80.00px;line-height:80.00px;font-size:32.79px;color:#bbbbbb;letter-spacing:-2.371px;">EXPLORER</div><div class="t" id="t2" style="left:309.00px;top:225.30px;height:80.00px;line-height:80.00px;font-size:32.79px;color:#cccccc;font-weight:bold;letter-spacing:-0.581px;">OPEN EDITORS</div><div class="t" id="t3" style="left:435.20px;top:288.30px;height:80.00px;line-height:80.00px;font-size:37.44px;color:#cccccc;letter-spacing:0.660px;">Buidl.sol</div><div class="t" id="t4" style="left:601.20px;top:289.50px;height:80.00px;line-height:80.00px;font-size:33.70px;color:#a0a0a0;letter-spacing:1.394px;">contracts</div><div class="t" id="t5" style="left:435.00px;top:351.80px;height:80.00px;line-height:80.00px;font-size:37.44px;color:#d3a500;font-style:italic;letter-spacing:-0.342px;">ERC20.sol</div><div class="t" id="t6" style="left:630.50px;top:352.90px;height:80.00px;line-height:80.00px;font-size:33.70px;color:#c09d00;font-style:italic;letter-spacing:0.356px;">node_modules/@...</div><div class="t" id="t7" style="left:948.70px;top:352.30px;height:80.00px;line-height:80.00px;font-size:34.44px;color:#b89500;font-style:italic;letter-spacing:2.679px;">9+</div><div class="t" id="t8" style="left:309.00px;top:415.30px;height:80.00px;line-height:80.00px;font-size:32.79px;color:#cccccc;font-weight:bold;letter-spacing:0.770px;">OPTIMISM-ERC20</div><div class="t" id="t9" style="left:395.00px;top:492.80px;height:80.00px;line-height:80.00px;font-size:37.44px;color:#cccccc;letter-spacing:0.792px;">proxy</div><div class="t" id="t10" style="left:395.00px;top:556.16px;height:80.00px;line-height:80.00px;font-size:37.44px;color:#cccccc;letter-spacing:1.225px;">security</div><div class="t" id="t11" style="left:395.00px;top:619.52px;height:80.00px;line-height:80.00px;font-size:37.44px;color:#d3a500;letter-spacing:0.785px;">token</div><div class="t" id="t12" style="left:418.40px;top:682.88px;height:80.00px;line-height:80.00px;font-size:37.44px;color:#cccccc;letter-spacing:0.981px;">common</div><div class="t" id="t13" style="left:418.40px;top:746.24px;height:80.00px;line-height:80.00px;font-size:37.44px;color:#d3a500;letter-spacing:-0.964px;">ERC20</div><div class="t" id="t14" style="left:441.00px;top:809.60px;height:80.00px;line-height:80.00px;font-size:37.44px;color:#cccccc;letter-spacing:0.712px;">extensions</div><div class="t" id="t15" style="left:441.00px;top:872.96px;height:80.00px;line-height:80.00px;font-size:37.44px;color:#cccccc;letter-spacing:0.981px;">presets</div><div class="t" id="t16" style="left:441.00px;top:936.32px;height:80.00px;line-height:80.00px;font-size:37.44px;color:#cccccc;letter-spacing:1.009px;">utils</div><div class="t" id="t17" style="left:441.00px;top:999.68px;height:80.00px;line-height:80.00px;font-size:37.44px;color:#d3a500;letter-spacing:-0.271px;">ERC20.sol</div><div class="t" id="t18" style="left:441.00px;top:1063.04px;height:80.00px;line-height:80.00px;font-size:37.44px;color:#cccccc;letter-spacing:-0.315px;">IERC20.sol</div><div class="t" id="t19" style="left:418.40px;top:1126.40px;height:80.00px;line-height:80.00px;font-size:37.44px;color:#cccccc;letter-spacing:-1.751px;">ERC721</div><div class="t" id="t20" style="left:418.40px;top:1189.76px;height:80.00px;line-height:80.00px;font-size:37.44px;color:#cccccc;letter-spacing:-1.195px;">ERC777</div><div class="t" id="t21" style="left:418.40px;top:1253.12px;height:80.00px;line-height:80.00px;font-size:37.44px;color:#cccccc;letter-spacing:-1.419px;">ERC1155</div><div class="t" id="t22" style="left:395.00px;top:1316.48px;height:80.00px;line-height:80.00px;font-size:37.44px;color:#cccccc;letter-spacing:0.940px;">utils</div><div class="t" id="t23" style="left:395.00px;top:1379.84px;height:80.00px;line-height:80.00px;font-size:37.44px;color:#cccccc;letter-spacing:0.940px;">vendor</div><div class="t" id="t24" style="left:343.50px;top:1441.70px;height:80.00px;line-height:80.00px;font-size:33.00px;color:#d6d612;font-weight:bold;letter-spacing:-2.025px;">{ }</div><div class="t" id="t25" style="left:395.00px;top:1443.20px;height:80.00px;line-height:80.00px;font-size:37.44px;color:#cccccc;letter-spacing:0.690px;">package.json</div><div class="t" id="t26" style="left:395.00px;top:1506.56px;height:80.00px;line-height:80.00px;font-size:37.44px;color:#cccccc;letter-spacing:-0.655px;">README.md</div><div class="t" id="t27" style="left:370.50px;top:1569.92px;height:80.00px;line-height:80.00px;font-size:37.44px;color:#cccccc;letter-spacing:0.557px;">@resolver-engine</div><div class="t" id="t28" style="left:370.50px;top:1633.28px;height:80.00px;line-height:80.00px;font-size:37.44px;color:#cccccc;letter-spacing:-0.278px;">@scure</div><div class="t" id="t29" style="left:370.50px;top:1696.64px;height:80.00px;line-height:80.00px;font-size:37.44px;color:#cccccc;letter-spacing:0.280px;">@sentry</div><div class="t" id="t30" style="left:370.50px;top:1760.00px;height:80.00px;line-height:80.00px;font-size:37.44px;color:#cccccc;letter-spacing:0.384px;">@sindresorhus</div><div class="t" id="t31" style="left:370.50px;top:1823.36px;height:80.00px;line-height:80.00px;font-size:37.44px;color:#cccccc;letter-spacing:0.914px;">@solidity-parser</div><div class="t" id="t32" style="left:370.50px;top:1886.72px;height:80.00px;line-height:80.00px;font-size:37.44px;color:#cccccc;letter-spacing:0.190px;">@szmarczak</div><div class="t" id="t33" style="left:370.50px;top:1950.08px;height:80.00px;line-height:80.00px;font-size:37.44px;color:#cccccc;letter-spacing:1.148px;">@truffle</div><div class="t" id="t34" style="left:370.50px;top:2013.44px;height:80.00px;line-height:80.00px;font-size:37.44px;color:#cccccc;letter-spacing:0.801px;">@tsconfig</div><div class="t" id="t35" style="left:948.70px;top:999.68px;height:80.00px;line-height:80.00px;font-size:34.44px;color:#b89500;letter-spacing:2.679px;">9+</div><div class="t" id="t36" style="left:308.90px;top:2068.30px;height:80.00px;line-height:80.00px;font-size:32.79px;color:#cccccc;font-weight:bold;letter-spacing:-0.293px;">OUTLINE</div><div class="t" id="t37" style="left:308.90px;top:2131.30px;height:80.00px;line-height:80.00px;font-size:32.79px;color:#cccccc;font-weight:bold;letter-spacing:-0.133px;">TIMELINE</div><div class="t" id="t38" style="left:1133.40px;top:142.80px;height:80.00px;line-height:80.00px;font-size:37.44px;color:#959595;letter-spacing:0.458px;">Buidl.sol</div><div class="t" id="t39" style="left:1478.00px;top:142.80px;height:80.00px;line-height:80.00px;font-size:37.44px;color:#d3a500;font-style:italic;letter-spacing:-0.461px;">ERC20.sol</div><div class="t" id="t40" style="left:1670.60px;top:143.30px;height:80.00px;line-height:80.00px;font-size:34.44px;color:#b89500;font-style:italic;letter-spacing:1.250px;">9+</div><div class="t" id="t41" style="left:1086.30px;top:225.30px;height:80.00px;line-height:80.00px;font-size:37.44px;color:#a9a9a9;letter-spacing:0.806px;">node_modules</div><div class="t" id="t42" style="left:1390.00px;top:225.30px;height:80.00px;line-height:80.00px;font-size:37.44px;color:#a9a9a9;letter-spacing:0.392px;">@openzeppelin</div><div class="t" id="t43" style="left:1703.40px;top:225.30px;height:80.00px;line-height:80.00px;font-size:37.44px;color:#a9a9a9;letter-spacing:1.401px;">contracts</div><div class="t" id="t44" style="left:1915.00px;top:225.30px;height:80.00px;line-height:80.00px;font-size:37.44px;color:#a9a9a9;letter-spacing:1.012px;">token</div><div class="t" id="t45" style="left:2058.00px;top:225.30px;height:80.00px;line-height:80.00px;font-size:37.44px;color:#a9a9a9;letter-spacing:-1.055px;">ERC20</div><div class="t" id="t46" style="left:2285.00px;top:225.30px;height:80.00px;line-height:80.00px;font-size:37.44px;color:#a9a9a9;letter-spacing:0.015px;">ERC20.sol</div><div class="t" id="t47" style="left:284.30px;top:2193.00px;height:80.00px;line-height:80.00px;font-size:34.56px;color:#ffffff;letter-spacing:-0.119px;">0</div><div class="t" id="t48" style="left:365.00px;top:2193.00px;height:80.00px;line-height:80.00px;font-size:34.56px;color:#ffffff;letter-spacing:-2.027px;">10</div><div class="t" id="t49" style="left:500.00px;top:2193.00px;height:80.00px;line-height:80.00px;font-size:34.56px;color:#ffffff;letter-spacing:0.194px;">Live Share</div><div class="t" id="t50" style="left:1561.40px;top:2193.00px;height:80.00px;line-height:80.00px;font-size:34.56px;color:#ffffff;letter-spacing:0.527px;">Ln 50, Col 7</div><div class="t" id="t51" style="left:1801.80px;top:2193.00px;height:80.00px;line-height:80.00px;font-size:34.56px;color:#ffffff;letter-spacing:0.602px;">Spaces: 4</div><div class="t" id="t52" style="left:2009.80px;top:2193.00px;height:80.00px;line-height:80.00px;font-size:34.56px;color:#ffffff;letter-spacing:1.119px;">UTF-8</div><div class="t" id="t53" style="left:2161.40px;top:2193.00px;height:80.00px;line-height:80.00px;font-size:34.56px;color:#ffffff;letter-spacing:-2.663px;">LF</div><div class="t" id="t54" style="left:2246.00px;top:2193.00px;height:80.00px;line-height:80.00px;font-size:34.56px;color:#ffffff;letter-spacing:0.990px;">Solidity</div><div class="t" id="t55" style="left:2463.70px;top:2193.00px;height:80.00px;line-height:80.00px;font-size:34.56px;color:#ffffff;letter-spacing:1.005px;">Prettier</div>
</div><div id="edge"></div></div>
</body></html>
